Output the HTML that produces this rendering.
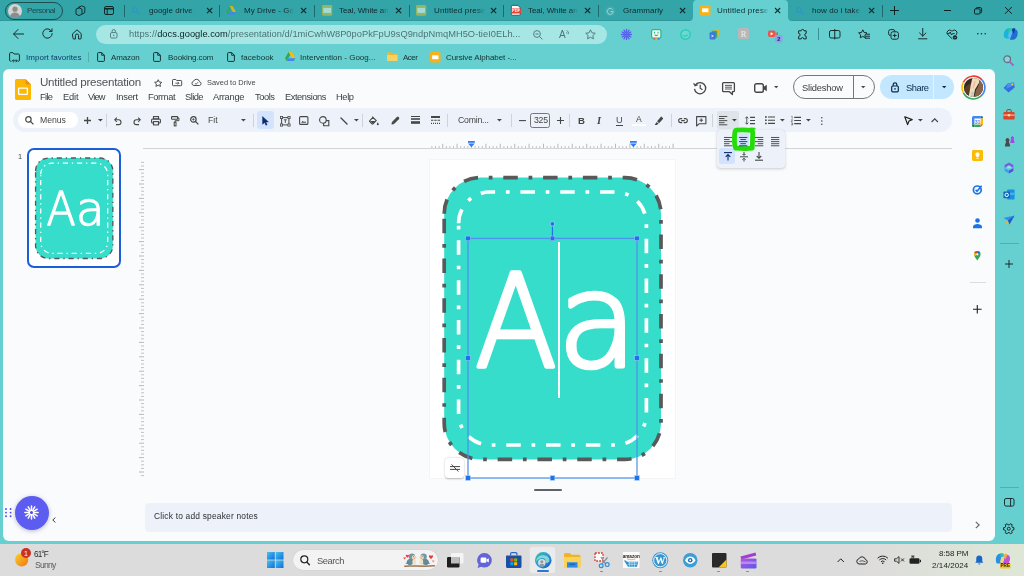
<!DOCTYPE html>
<html><head><meta charset="utf-8"><title>Untitled presentation - Google Slides</title>
<style>
*{box-sizing:border-box;margin:0;padding:0}
html,body{width:1024px;height:576px;overflow:hidden}
body{position:relative;background:#66d0d1;font-family:"Liberation Sans",sans-serif;color:#1f1f1f}
.abs{position:absolute}
.t{position:absolute;white-space:nowrap;line-height:1}
svg{position:absolute;overflow:visible}
.x{will-change:opacity}
</style></head><body>

<!-- tab bar -->
<div class="abs" style="left:0.00px;top:0.00px;width:1024.00px;height:21.00px;background:#33a4a7;box-shadow:inset 0 -1px 0 #2e989b"></div>
<div class="abs" style="left:5px;top:2px;width:58px;height:17.5px;border:1px solid #1d4f51;border-radius:9px"></div>
<svg style="left:8.00px;top:3.50px" width="14" height="14" viewBox="0 0 14 14" ><circle cx="7" cy="7" r="7" fill="#d4d4d4"/><circle cx="7" cy="5.2" r="2.6" fill="#8c8c8c"/><path d="M2.2 12.2a4.8 3.6 0 0 1 9.6 0A7 7 0 0 1 2.2 12.2z" fill="#8c8c8c"/></svg>
<svg class="x" style="left:27.00px;top:13.00px" width="1" height="1"><text x="0" y="0" font-size="8.00" letter-spacing="-0.439" fill="#1c4a4c" >Personal</text></svg>
<svg style="left:75.00px;top:5.00px" width="11" height="11" viewBox="0 0 11 11" ><g fill="none" stroke="#143032" stroke-width="1"><path d="M3.6 2.2l3.2-1.3 3 1.2v5.6l-3 1.4"/><path d="M1 4.2l3-1.4 3 1.4v5l-3 1.4-3-1.4z"/><path d="M2.4 3.4l2.8-1.2"/></g></svg>
<svg style="left:104.00px;top:6.00px" width="10" height="9" viewBox="0 0 10 9" ><rect x=".5" y=".5" width="9" height="8" rx="1.5" fill="none" stroke="#102a2b" stroke-width="1"/><path d="M.5 2.7h9" stroke="#102a2b" stroke-width="1.6"/><path d="M3.2 2.5v6" stroke="#102a2b" stroke-width="1"/></svg>
<div class="abs" style="left:123.60px;top:4.50px;width:0.80px;height:12.50px;background:#1f6a6c;"></div>
<svg style="left:132.00px;top:6.60px" width="8" height="8" viewBox="0 0 8 8" ><circle cx="3" cy="3" r="2.4" fill="none" stroke="#2f8fd8" stroke-width="0.85"/><path d="M4.8 4.8L7.4 7.4" stroke="#2f8fd8" stroke-width="1.05"/></svg>
<svg class="x" style="left:148.60px;top:13.00px" width="1" height="1"><text x="0" y="0" font-size="8.00" letter-spacing="0.002" fill="#0f2a2b" >google drive -</text></svg>
<div class="abs" style="left:189px;top:5px;width:16px;height:12px;background:linear-gradient(90deg,rgba(51,164,167,0),rgba(51,164,167,1) 43.75%)"></div>
<svg style="left:206.90px;top:8.00px" width="5.2" height="5.2" viewBox="0 0 5.2 5.2" ><path d="M0 0L5.2 5.2 M5.2 0L0 5.2" stroke="#10292a" stroke-width="1.1" fill="none"/></svg>
<div class="abs" style="left:219.30px;top:4.50px;width:0.80px;height:12.50px;background:#1f6a6c;"></div>
<svg style="left:226.00px;top:6.20px" width="10" height="9" viewBox="0 0 10 9" ><g opacity="0.75"><path d="M3.4 0h3.2l3.4 5.9H6.8z" fill="#fbbc04"/><path d="M3.4 0L0 5.9l1.6 2.8L5 2.8z" fill="#34a853"/><path d="M1.6 8.7h6.8L10 5.9H3.2z" fill="#4285f4"/></g></svg>
<svg class="x" style="left:243.80px;top:13.00px" width="1" height="1"><text x="0" y="0" font-size="8.00" letter-spacing="0.055" fill="#0f2a2b" >My Drive - Goo</text></svg>
<div class="abs" style="left:286px;top:5px;width:17px;height:12px;background:linear-gradient(90deg,rgba(51,164,167,0),rgba(51,164,167,1) 47.0588%)"></div>
<svg style="left:301.40px;top:8.00px" width="5.2" height="5.2" viewBox="0 0 5.2 5.2" ><path d="M0 0L5.2 5.2 M5.2 0L0 5.2" stroke="#10292a" stroke-width="1.1" fill="none"/></svg>
<div class="abs" style="left:313.90px;top:4.50px;width:0.80px;height:12.50px;background:#1f6a6c;"></div>
<svg style="left:321.80px;top:5.20px" width="10.3" height="10.8" viewBox="0 0 10.3 10.8" ><rect width="10.300" height="10.800" rx="1.500" fill="#97b463"/><rect x="1.300" y="2.900" width="7.700" height="5" fill="#a2dcd9"/></svg>
<svg class="x" style="left:338.70px;top:13.00px" width="1" height="1"><text x="0" y="0" font-size="8.00" letter-spacing="-0.081" fill="#0f2a2b" >Teal, White and</text></svg>
<div class="abs" style="left:381px;top:5px;width:17px;height:12px;background:linear-gradient(90deg,rgba(51,164,167,0),rgba(51,164,167,1) 47.0588%)"></div>
<svg style="left:395.90px;top:8.00px" width="5.2" height="5.2" viewBox="0 0 5.2 5.2" ><path d="M0 0L5.2 5.2 M5.2 0L0 5.2" stroke="#10292a" stroke-width="1.1" fill="none"/></svg>
<div class="abs" style="left:408.60px;top:4.50px;width:0.80px;height:12.50px;background:#1f6a6c;"></div>
<svg style="left:416.00px;top:5.20px" width="10.3" height="10.8" viewBox="0 0 10.3 10.8" ><rect width="10.300" height="10.800" rx="1.500" fill="#97b463"/><rect x="1.300" y="2.900" width="7.700" height="5" fill="#a2dcd9"/></svg>
<svg class="x" style="left:433.60px;top:13.00px" width="1" height="1"><text x="0" y="0" font-size="8.00" letter-spacing="0.165" fill="#0f2a2b" >Untitled prese</text></svg>
<div class="abs" style="left:476px;top:5px;width:18px;height:12px;background:linear-gradient(90deg,rgba(51,164,167,0),rgba(51,164,167,1) 50%)"></div>
<svg style="left:490.90px;top:8.00px" width="5.2" height="5.2" viewBox="0 0 5.2 5.2" ><path d="M0 0L5.2 5.2 M5.2 0L0 5.2" stroke="#10292a" stroke-width="1.1" fill="none"/></svg>
<div class="abs" style="left:503.10px;top:4.50px;width:0.80px;height:12.50px;background:#1f6a6c;"></div>
<svg style="left:511.00px;top:5.00px" width="10" height="10.6" viewBox="0 0 10 10.6" ><path d="M1.200 .4h5.600l2.400 2.400v6.600a.8.800 0 0 1-.8.800H1.200a.8.800 0 0 1-.8-.8V1.200a.8.800 0 0 1 .8-.8z" fill="#fdfdfd" stroke="#2a2f30" stroke-width=".7"/><rect x="0" y="3.600" width="10" height="5" rx=".8" fill="#ea4335"/><text x="5" y="7.500" font-size="4" font-weight="bold" fill="#fff" text-anchor="middle" font-family="Liberation Sans, sans-serif">PDF</text></svg>
<svg class="x" style="left:527.60px;top:13.00px" width="1" height="1"><text x="0" y="0" font-size="8.00" letter-spacing="-0.081" fill="#0f2a2b" >Teal, White and</text></svg>
<div class="abs" style="left:570px;top:5px;width:17px;height:12px;background:linear-gradient(90deg,rgba(51,164,167,0),rgba(51,164,167,1) 47.0588%)"></div>
<svg style="left:585.40px;top:8.00px" width="5.2" height="5.2" viewBox="0 0 5.2 5.2" ><path d="M0 0L5.2 5.2 M5.2 0L0 5.2" stroke="#10292a" stroke-width="1.1" fill="none"/></svg>
<div class="abs" style="left:598.10px;top:4.50px;width:0.80px;height:12.50px;background:#1f6a6c;"></div>
<svg style="left:605.00px;top:5.60px" width="10.5" height="10.5" viewBox="0 0 10.5 10.5" ><circle cx="5.25" cy="5.25" r="5.25" fill="#44a9ab"/><path d="M7.600 3.600A3 3 0 1 0 8.200 5.600H5.600" fill="none" stroke="#9ad6d6" stroke-width="1"/></svg>
<svg class="x" style="left:622.50px;top:13.00px" width="1" height="1"><text x="0" y="0" font-size="8.00" letter-spacing="0.056" fill="#0f2a2b" >Grammarly</text></svg>
<svg style="left:680.40px;top:8.00px" width="5.2" height="5.2" viewBox="0 0 5.2 5.2" ><path d="M0 0L5.2 5.2 M5.2 0L0 5.2" stroke="#10292a" stroke-width="1.1" fill="none"/></svg>
<div class="abs" style="left:693px;top:0;width:95px;height:21px;background:#66d0d1;border-radius:4px 4px 0 0"></div>
<svg style="left:689.00px;top:17.00px" width="4" height="4" viewBox="0 0 4 4" ><path d="M4 0v4H0A4 4 0 0 0 4 0z" fill="#66d0d1"/></svg>
<svg style="left:788.00px;top:17.00px" width="4" height="4" viewBox="0 0 4 4" ><path d="M0 0v4h4A4 4 0 0 1 0 0z" fill="#66d0d1"/></svg>
<svg style="left:700.00px;top:5.40px" width="10.5" height="10.5" viewBox="0 0 10.5 10.5" ><rect width="10.5" height="10.5" rx="1.6" fill="#f9b114"/><rect x="2.1" y="3.3" width="6.3" height="3.9" fill="#fff"/></svg>
<svg class="x" style="left:717.40px;top:13.00px" width="1" height="1"><text x="0" y="0" font-size="8.00" letter-spacing="0.165" fill="#0f2a2b" >Untitled prese</text></svg>
<div class="abs" style="left:760px;top:5px;width:18px;height:12px;background:linear-gradient(90deg,rgba(102,208,209,0),rgba(102,208,209,1) 50%)"></div>
<svg style="left:775.40px;top:8.00px" width="5.2" height="5.2" viewBox="0 0 5.2 5.2" ><path d="M0 0L5.2 5.2 M5.2 0L0 5.2" stroke="#10292a" stroke-width="1.1" fill="none"/></svg>
<svg style="left:796.00px;top:6.60px" width="8" height="8" viewBox="0 0 8 8" ><circle cx="3" cy="3" r="2.4" fill="none" stroke="#2f8fd8" stroke-width="0.85"/><path d="M4.8 4.8L7.4 7.4" stroke="#2f8fd8" stroke-width="1.05"/></svg>
<svg class="x" style="left:811.80px;top:13.00px" width="1" height="1"><text x="0" y="0" font-size="8.00" letter-spacing="0.081" fill="#0f2a2b" >how do i take s</text></svg>
<div class="abs" style="left:854px;top:5px;width:16px;height:12px;background:linear-gradient(90deg,rgba(51,164,167,0),rgba(51,164,167,1) 43.75%)"></div>
<svg style="left:869.40px;top:8.00px" width="5.2" height="5.2" viewBox="0 0 5.2 5.2" ><path d="M0 0L5.2 5.2 M5.2 0L0 5.2" stroke="#10292a" stroke-width="1.1" fill="none"/></svg>
<div class="abs" style="left:882.00px;top:4.50px;width:0.80px;height:12.50px;background:#1f6a6c;"></div>
<svg style="left:890.00px;top:6.30px" width="9" height="9" viewBox="0 0 9 9" ><path d="M4.5 0v9M0 4.5h9" stroke="#0d2223" stroke-width="1" fill="none"/></svg>
<svg style="left:944.00px;top:10.10px" width="7" height="1" viewBox="0 0 7 1" ><path d="M0 .5h7" stroke="#0d2223" stroke-width="1"/></svg>
<svg style="left:973.50px;top:7.00px" width="8" height="7.5" viewBox="0 0 8 7.5" ><rect x=".5" y="1.8" width="5.6" height="5.2" rx="1.2" fill="none" stroke="#0d2223" stroke-width="1"/><path d="M2 1.8A1.4 1.4 0 0 1 3.4 .5h2.7A1.6 1.6 0 0 1 7.6 2v2.6A1.4 1.4 0 0 1 6.2 6" fill="none" stroke="#0d2223" stroke-width="1"/></svg>
<svg style="left:1005.10px;top:7.20px" width="6.8" height="6.8" viewBox="0 0 6.8 6.8" ><path d="M0 0L6.8 6.8 M6.8 0L0 6.8" stroke="#0d2223" stroke-width="1" fill="none"/></svg>
<!-- nav bar -->
<svg style="left:13.00px;top:29.00px" width="11" height="10" viewBox="0 0 11 10" ><path d="M5 .5L.6 5 5 9.5M.8 5H10.6" fill="none" stroke="#1b2b2c" stroke-width="1" stroke-linecap="round" stroke-linejoin="round"/></svg>
<svg style="left:42.00px;top:28.30px" width="11" height="11" viewBox="0 0 11 11" ><path d="M9.6 3.2A4.7 4.7 0 1 0 10.2 5.5" fill="none" stroke="#1b2b2c" stroke-width="1" stroke-linecap="round" stroke-linejoin="round"/><path d="M10 .8v2.6H7.4" fill="none" stroke="#1b2b2c" stroke-width="1" stroke-linecap="round" stroke-linejoin="round"/></svg>
<svg style="left:72.00px;top:28.50px" width="10" height="11" viewBox="0 0 10 11" ><path d="M.8 4.6L5 .8l4.2 3.8V9a1 1 0 0 1-1 1H6.6V6.6a1.6 1.6 0 0 0-3.2 0V10H1.8a1 1 0 0 1-1-1z" fill="none" stroke="#1b2b2c" stroke-width="1" stroke-linecap="round" stroke-linejoin="round"/></svg>
<div class="abs" style="left:96px;top:24.5px;width:510.5px;height:19.5px;border-radius:10px;background:#a6e7e5"></div>
<svg style="left:109.50px;top:29.30px" width="7.5" height="9.5" viewBox="0 0 7.5 9.5" ><rect x=".5" y="3.6" width="6.5" height="5.4" rx="1.2" fill="none" stroke="#4d7374" stroke-width=".9"/><path d="M2.1 3.6V2.2a1.65 1.65 0 0 1 3.3 0v1.4" fill="none" stroke="#4d7374" stroke-width=".9"/><circle cx="3.75" cy="6.3" r=".7" fill="#4d7374"/></svg>
<svg class="x" style="left:128.7px;top:37.4px" width="1" height="1"><text x="0" y="0" font-size="9.3" letter-spacing="0.028" fill="#4c7475">https://<tspan fill="#0c2021">docs.google.com</tspan>/presentation/d/1miCwhW8P0poPkFpU9sQ9ndpNmqMH5O-tieI0ELh...</text></svg>
<svg style="left:532.50px;top:29.50px" width="10" height="10" viewBox="0 0 10 10" ><circle cx="4" cy="4" r="3.4" fill="none" stroke="#4d7374" stroke-width=".9"/><path d="M6.5 6.5L9.4 9.4M2.4 4h3.2" stroke="#4d7374" stroke-width=".9" fill="none"/></svg>
<svg class="x" style="left:558.50px;top:37.60px" width="1" height="1"><text x="0" y="0" font-size="10.00" fill="#4d7374" >A</text></svg>
<svg style="left:566.00px;top:29.50px" width="4" height="5" viewBox="0 0 4 5" ><path d="M.5 .5a3 3 0 0 1 2 3.6M.3 2.3a1.4 1.4 0 0 1 .8 1.5" fill="none" stroke="#4d7374" stroke-width=".7"/></svg>
<svg style="left:585.00px;top:28.80px" width="11" height="10.5" viewBox="0 0 11 10.5" ><path d="M5.5 .8l1.45 3 3.3.45-2.4 2.3.58 3.25L5.5 8.25 2.57 9.8l.58-3.25L.75 4.25l3.3-.45z" fill="none" stroke="#4d7374" stroke-width=".9" stroke-linejoin="round"/></svg>
<svg style="left:620.50px;top:28.50px" width="11" height="11" viewBox="0 0 11 11" ><g transform="translate(5.5 5.5)" stroke="#5b5bf0" stroke-width="1.3" stroke-linecap="round"><path d="M0 -2.2V-5" transform="rotate(0)"/><path d="M0 -2.2V-5" transform="rotate(30)"/><path d="M0 -2.2V-5" transform="rotate(60)"/><path d="M0 -2.2V-5" transform="rotate(90)"/><path d="M0 -2.2V-5" transform="rotate(120)"/><path d="M0 -2.2V-5" transform="rotate(150)"/><path d="M0 -2.2V-5" transform="rotate(180)"/><path d="M0 -2.2V-5" transform="rotate(210)"/><path d="M0 -2.2V-5" transform="rotate(240)"/><path d="M0 -2.2V-5" transform="rotate(270)"/><path d="M0 -2.2V-5" transform="rotate(300)"/><path d="M0 -2.2V-5" transform="rotate(330)"/></g><circle cx="5.5" cy="5.5" r="1.6" fill="#5b5bf0"/></svg>
<svg style="left:650.50px;top:28.50px" width="10.5" height="11" viewBox="0 0 10.5 11" ><rect x=".6" y=".6" width="9.300" height="8.400" rx="1.600" fill="#f4fbf8" stroke="#2db67d" stroke-width="1.200"/><path d="M3.500 2.800v1.600M7 2.800v1.600" stroke="#2db67d" stroke-width="1.100"/><path d="M3 5.800a2.300 1.800 0 0 0 4.500 0z" fill="#2db67d"/><rect x="2.500" y="9.200" width="2" height="1.400" fill="#e8503a"/><rect x="4.500" y="9.200" width="2" height="1.400" fill="#f7b928"/><rect x="6.500" y="9.200" width="2" height="1.400" fill="#3a78e8"/></svg>
<svg style="left:679.50px;top:28.50px" width="11" height="11" viewBox="0 0 11 11" ><circle cx="5.500" cy="5.500" r="4.700" fill="#6ad9d2" stroke="#1fcdb4" stroke-width="1.300"/><path d="M3.300 6.300a2.500 2 0 0 0 4.400 -.8" fill="none" stroke="#1fc0a8" stroke-width="1"/></svg>
<svg style="left:708.50px;top:28.50px" width="11" height="11" viewBox="0 0 11 11" ><rect x="4.5" y=".6" width="5.6" height="7" rx="1" fill="#d9b838"/><rect x="2.6" y="1.8" width="5.6" height="7" rx="1" fill="#3fa56b"/><rect x=".6" y="3.2" width="6" height="7.2" rx="1" fill="#3b78dc"/><path d="M2.6 5.6l2.4 1.4-2.4 1.4z" fill="#cfe0fa"/></svg>
<svg style="left:737.50px;top:28.30px" width="11" height="11" viewBox="0 0 11 11" ><rect width="11" height="11" rx="1.6" fill="#b8b8b8"/><text x="5.5" y="8.6" font-size="8.5" fill="#eee" text-anchor="middle" font-family="Liberation Serif, serif">R</text></svg>
<svg style="left:767.50px;top:29.50px" width="10" height="8" viewBox="0 0 10 8" ><rect x="0" y=".6" width="7.6" height="6.4" rx="1.8" fill="#e8574a"/><path d="M7.4 3.8l2.6-2v4.4z" fill="#e8574a"/><path d="M2.6 2.2v3.2l2.8-1.6z" fill="#fff"/></svg>
<svg style="left:774.50px;top:35.00px" width="7.5" height="7.5" viewBox="0 0 7.5 7.5" ><rect width="7.5" height="7.5" rx="1.4" fill="#8fa0ec"/><text x="3.75" y="6" font-size="5.6" font-weight="bold" fill="#1a2250" text-anchor="middle" font-family="Liberation Sans, sans-serif">2</text></svg>
<svg style="left:797.00px;top:28.50px" width="11" height="11" viewBox="0 0 11 11" ><path d="M4.2 1.8a1.4 1.4 0 0 1 2.8 0h2.2v2.6a1.45 1.45 0 0 0 0 2.9v2.6H6.8a1.3 1.3 0 0 0-2.6 0H1.6V7.4a1.5 1.5 0 0 0 0-3V1.8z" fill="none" stroke="#1b2b2c" stroke-width="1" stroke-linejoin="round"/></svg>
<div class="abs" style="left:818.20px;top:28.00px;width:0.80px;height:12.00px;background:#3e8f90;"></div>
<svg style="left:828.50px;top:29.00px" width="11.5" height="10" viewBox="0 0 11.5 10" ><rect x=".5" y="1.5" width="10.5" height="7.5" rx="1.6" fill="none" stroke="#1b2b2c" stroke-width="1"/><path d="M5.75 0v10.4" stroke="#1b2b2c" stroke-width="1"/></svg>
<svg style="left:857.50px;top:28.60px" width="12" height="10.5" viewBox="0 0 12 10.5" ><path d="M4.8 .8l1.3 2.7 2.9.4-2.1 2 .5 2.9-2.6-1.4-2.6 1.4.5-2.9-2.1-2 2.9-.4z" fill="none" stroke="#1b2b2c" stroke-width="1" stroke-linejoin="round"/><path d="M8.6 5.2h3M8.2 7.2h3.4M7.4 9.2h4.2" stroke="#1b2b2c" stroke-width="1" stroke-linecap="round"/></svg>
<svg style="left:888.00px;top:28.50px" width="11" height="11" viewBox="0 0 11 11" ><path d="M2.4 6.6A2 2 0 0 1 .6 4.6V2.6A2 2 0 0 1 2.6 .6h2.4A2 2 0 0 1 7 2.4" fill="none" stroke="#1b2b2c" stroke-width="1"/><rect x="3" y="2.8" width="7.4" height="7.4" rx="1.8" fill="none" stroke="#1b2b2c" stroke-width="1"/><path d="M6.7 4.6v3.8M4.8 6.5h3.8" stroke="#1b2b2c" stroke-width="1"/></svg>
<svg style="left:918.00px;top:28.30px" width="9.5" height="11.5" viewBox="0 0 9.5 11.5" ><path d="M4.75 .4v7.6M1.6 5l3.15 3.1L7.9 5M.6 10.8h8.3" fill="none" stroke="#1b2b2c" stroke-width="1" stroke-linecap="round" stroke-linejoin="round"/></svg>
<svg style="left:946.00px;top:28.60px" width="12" height="11" viewBox="0 0 12 11" ><path d="M6 9.6L1.6 5.4A2.7 2.7 0 0 1 5.6 1.8l.4.5.4-.5a2.7 2.7 0 0 1 4 3.6l-.6.6" fill="none" stroke="#1b2b2c" stroke-width="1" stroke-linecap="round" stroke-linejoin="round"/><path d="M1.2 4.6h2l1-1.6 1.4 3 1-1.4h1.6" fill="none" stroke="#1b2b2c" stroke-width="1" stroke-linecap="round" stroke-linejoin="round"/><circle cx="9" cy="8.4" r="2.2" fill="#10292a"/><path d="M8.1 8.4l.7.7 1.2-1.3" stroke="#9fe0df" stroke-width=".6" fill="none"/></svg>
<svg style="left:976.50px;top:33.00px" width="9" height="1.6" viewBox="0 0 9 1.6" ><circle cx=".8" cy=".8" r=".8" fill="#1b2b2c"/><circle cx="4.5" cy=".8" r=".8" fill="#1b2b2c"/><circle cx="8.2" cy=".8" r=".8" fill="#1b2b2c"/></svg>
<svg style="left:1003.00px;top:26.50px" width="15.5" height="14" viewBox="0 0 15.5 14" ><path d="M1 9.5C.2 6 2 1.5 5.4 1.2h3.2L6 11.6H3.4A2.4 2.4 0 0 1 1 9.500z" fill="#19b4d8"/><path d="M5.4 1.2C7 .8 8.6 1 9 2.6l-1.2 4-2-.4z" fill="#2bc9a0"/><path d="M14.5 4.5c.8 3.500-1 8-4.400 8.300H6.900L9.500 2.400h2.600a2.400 2.400 0 0 1 2.400 2.100z" fill="#1e6fd0"/><path d="M8.800 2.600c.6-1.400 2.400-1.600 3.600-.8l-2 5.200z" fill="#0e3fa0"/><path d="M6.200 4.600h3.400l-1.600 5.400H4.600z" fill="#5fb8ee"/></svg>
<!-- bookmarks -->
<svg style="left:9.00px;top:51.50px" width="11.5" height="10.5" viewBox="0 0 11.5 10.5" ><path d="M.6 8.600V1.600a1 1 0 0 1 1-1h2.300l1.200 1.400h4.300a1 1 0 0 1 1 1v5.200a1 1 0 0 1-1 1H9" fill="none" stroke="#13302f" stroke-width="1" stroke-linejoin="round"/><path d="M.6 8.600a1 1 0 0 0 1 .6h.8" fill="none" stroke="#13302f" stroke-width="1"/><path d="M3.600 8.800h4.600M4.800 7.400L3.400 8.800l1.400 1.400M7 7.400l1.400 1.400L7 10.200" fill="none" stroke="#13302f" stroke-width=".9"/></svg>
<svg class="x" style="left:25.80px;top:59.60px" width="1" height="1"><text x="0" y="0" font-size="8.00" letter-spacing="0.025" fill="#0e3a6a" >Import favorites</text></svg>
<div class="abs" style="left:88.00px;top:52.00px;width:0.70px;height:10.00px;background:#4fb0b1;"></div>
<svg style="left:97.00px;top:51.60px" width="8" height="10" viewBox="0 0 8 10" ><path d="M.6 1.400a.8.800 0 0 1 .8-.8h3.400l2.600 2.600v5.400a.8.800 0 0 1-.8.800H1.400a.8.800 0 0 1-.8-.8z" fill="none" stroke="#13302f" stroke-width="1" stroke-linejoin="round"/><path d="M4.700.700v2.600h2.600" fill="none" stroke="#13302f" stroke-width=".9"/></svg>
<svg class="x" style="left:111.30px;top:59.60px" width="1" height="1"><text x="0" y="0" font-size="8.00" letter-spacing="-0.110" fill="#13302f" >Amazon</text></svg>
<svg style="left:153.00px;top:51.60px" width="8" height="10" viewBox="0 0 8 10" ><path d="M.6 1.400a.8.800 0 0 1 .8-.8h3.400l2.600 2.600v5.400a.8.800 0 0 1-.8.800H1.400a.8.800 0 0 1-.8-.8z" fill="none" stroke="#13302f" stroke-width="1" stroke-linejoin="round"/><path d="M4.700.700v2.600h2.600" fill="none" stroke="#13302f" stroke-width=".9"/></svg>
<svg class="x" style="left:167.60px;top:59.60px" width="1" height="1"><text x="0" y="0" font-size="8.00" letter-spacing="-0.075" fill="#13302f" >Booking.com</text></svg>
<svg style="left:226.50px;top:51.60px" width="8" height="10" viewBox="0 0 8 10" ><path d="M.6 1.400a.8.800 0 0 1 .8-.8h3.400l2.600 2.600v5.400a.8.800 0 0 1-.8.800H1.400a.8.800 0 0 1-.8-.8z" fill="none" stroke="#13302f" stroke-width="1" stroke-linejoin="round"/><path d="M4.700.700v2.600h2.600" fill="none" stroke="#13302f" stroke-width=".9"/></svg>
<svg class="x" style="left:240.60px;top:59.60px" width="1" height="1"><text x="0" y="0" font-size="8.00" letter-spacing="0.019" fill="#13302f" >facebook</text></svg>
<svg style="left:285.00px;top:52.30px" width="10.5" height="9.45" viewBox="0 0 10 9" ><g opacity="1"><path d="M3.4 0h3.2l3.4 5.9H6.8z" fill="#fbbc04"/><path d="M3.4 0L0 5.9l1.6 2.8L5 2.8z" fill="#34a853"/><path d="M1.6 8.7h6.8L10 5.9H3.2z" fill="#4285f4"/></g></svg>
<svg class="x" style="left:300.00px;top:59.60px" width="1" height="1"><text x="0" y="0" font-size="8.00" letter-spacing="0.017" fill="#13302f" >Intervention - Goog...</text></svg>
<svg style="left:386.50px;top:52.00px" width="10.5" height="9" viewBox="0 0 10.5 9" ><path d="M0 1.200a1 1 0 0 1 1-1h3l1.200 1.300h4.300a1 1 0 0 1 1 1V8a1 1 0 0 1-1 1H1a1 1 0 0 1-1-1z" fill="#e9b83a"/><path d="M0 3h10.500v5a1 1 0 0 1-1 1H1a1 1 0 0 1-1-1z" fill="#f6d264"/></svg>
<svg class="x" style="left:403.30px;top:59.60px" width="1" height="1"><text x="0" y="0" font-size="8.00" letter-spacing="-0.483" fill="#13302f" >Acer</text></svg>
<svg style="left:429.50px;top:51.80px" width="10.5" height="10.5" viewBox="0 0 10.5 10.5" ><rect width="10.500" height="10.500" rx="1.600" fill="#f9b114"/><rect x="2.100" y="3.300" width="6.300" height="3.900" fill="#fff"/></svg>
<svg class="x" style="left:446.00px;top:59.60px" width="1" height="1"><text x="0" y="0" font-size="8.00" letter-spacing="-0.077" fill="#13302f" >Cursive Alphabet -...</text></svg>
<!-- edge sidebar -->
<svg style="left:1003.10px;top:55.00px" width="11" height="11" viewBox="0 0 11 11" ><circle cx="4.200" cy="4.200" r="3.300" fill="#9ad8ee" fill-opacity=".6" stroke="#6a6f78" stroke-width="1.300"/><path d="M6.800 6.800L10 10" stroke="#b455d8" stroke-width="1.800" stroke-linecap="round"/></svg>
<svg style="left:1002.60px;top:82.00px" width="12" height="11" viewBox="0 0 12 11" ><path d="M5 1.200L11 .4l.6 5L5.600 10.600 .6 6z" fill="#2f6fe0"/><path d="M5 1.200L11 .4l.300 2.600L3 7z" fill="#4f8ff0"/><circle cx="9.300" cy="2.600" r="1" fill="#f3c13a"/></svg>
<svg style="left:1002.60px;top:109.00px" width="12" height="11" viewBox="0 0 12 11" ><rect x=".4" y="3" width="11.200" height="7.600" rx="1.200" fill="#d8452b"/><path d="M3.800 3V1.600a1 1 0 0 1 1-1h2.400a1 1 0 0 1 1 1V3" fill="none" stroke="#a83a2a" stroke-width="1"/><rect x=".4" y="5.400" width="11.200" height="1.400" fill="#f2a58f"/><rect x="4.800" y="5" width="2.400" height="2.400" fill="#f6d8a0"/></svg>
<svg style="left:1002.60px;top:135.00px" width="12" height="12" viewBox="0 0 12 12" ><path d="M2 11.400h5V10L5.800 6.600A2 2 0 1 0 3.200 6.600L2 10z" fill="#4a4a4a"/><path d="M7.400 8h4V6.800L10.600 4a1.600 1.600 0 1 0-2.400 0L7.400 6.800z" fill="#a646e8"/></svg>
<svg style="left:1002.60px;top:162.00px" width="12" height="12" viewBox="0 0 12 12" ><path d="M6 .6L10.400 3v3L6 3.600 1.600 6V3z" fill="#7a5cf0"/><path d="M1.600 6L6 8.400V11.400L1.600 9z" fill="#3aa0f0"/><path d="M10.400 6L6 8.400V11.400L10.400 9z" fill="#5a4fd8"/><path d="M6 3.600l2.400 1.300L6 6.200 3.600 4.900z" fill="#9fe0df"/></svg>
<svg style="left:1002.60px;top:189.00px" width="12" height="11" viewBox="0 0 12 11" ><rect x="4" y=".6" width="7.600" height="9.800" rx="1" fill="#1a8fe0"/><path d="M4 3.600h7.600V6H4z" fill="#3fb2f5"/><rect x=".4" y="2.600" width="6.600" height="6.600" rx="1" fill="#0f68c0"/><circle cx="3.700" cy="5.900" r="1.700" fill="none" stroke="#fff" stroke-width="1"/></svg>
<svg style="left:1002.60px;top:215.00px" width="12" height="10" viewBox="0 0 12 10" ><path d="M.4 3L11.600 .6 6.400 9.400 5 5.600z" fill="#2f8fe8"/><path d="M5 5.600L11.600 .6 6.400 9.400z" fill="#1a5fc0"/><path d="M2 6.400l3 .6 1.400 2.400-3-.6z" fill="#f0b030"/></svg>
<div class="abs" style="left:1000.00px;top:242.60px;width:18.50px;height:0.80px;background:#4fb0b1;"></div>
<svg style="left:1004.60px;top:260.00px" width="8" height="8" viewBox="0 0 8 8" ><path d="M4 0v8M0 4h8" stroke="#1b2b2c" stroke-width="1"/></svg>
<div class="abs" style="left:1000.00px;top:487.20px;width:18.50px;height:0.80px;background:#4fb0b1;"></div>
<svg style="left:1003.80px;top:498.20px" width="10.5" height="8.6" viewBox="0 0 10.5 8.6" ><rect x=".5" y=".5" width="9.500" height="7.600" rx="1.600" fill="none" stroke="#1b2b2c" stroke-width="1"/><path d="M6.600 .5v7.600" stroke="#1b2b2c" stroke-width="1"/></svg>
<svg style="left:1003.30px;top:523.30px" width="11.5" height="11.5" viewBox="0 0 11.5 11.5" ><path d="M10.93 4.65 L10.93 6.85 L9.55 6.99 L8.72 8.43 L9.30 9.69 L7.39 10.79 L6.58 9.66 L4.92 9.66 L4.11 10.79 L2.20 9.69 L2.78 8.43 L1.95 6.99 L0.57 6.85 L0.57 4.65 L1.95 4.51 L2.78 3.07 L2.20 1.81 L4.11 0.71 L4.92 1.84 L6.58 1.84 L7.39 0.71 L9.30 1.81 L8.72 3.07 L9.55 4.51z" fill="none" stroke="#1b2b2c" stroke-width="1" stroke-linejoin="round"/><circle cx="5.750" cy="5.750" r="1.500" fill="none" stroke="#1b2b2c" stroke-width="1"/></svg>
<!-- page -->
<div class="abs" style="left:3px;top:69px;width:991.700px;height:472px;background:#f9fbfd;border-radius:6px 6px 6px 6px"></div>
<svg style="left:15.00px;top:78.80px" width="16" height="21" viewBox="0 0 16 21" ><path d="M0 1.600A1.600 1.600 0 0 1 1.600 0H10.500L16 5.500V19.400A1.600 1.600 0 0 1 14.400 21H1.600A1.600 1.600 0 0 1 0 19.400z" fill="#fbb704"/><path d="M10.500 0L16 5.500h-4a1.500 1.500 0 0 1-1.500-1.500z" fill="#e8911a"/><rect x="3.600" y="9.200" width="8.800" height="6.200" rx=".6" fill="none" stroke="#fff" stroke-width="1.300"/></svg>
<svg class="x" style="left:40.00px;top:85.50px" width="1" height="1"><text x="0" y="0" font-size="11.60" letter-spacing="-0.255" fill="#505357" >Untitled presentation</text></svg>
<svg style="left:153.80px;top:79.20px" width="8.4" height="8" viewBox="0 0 8.4 8" ><path d="M4.200 .7l1.100 2.300 2.500.3-1.850 1.700.5 2.450L4.200 6.200 1.950 7.450l.5-2.450L.6 3.300l2.500-.3z" fill="none" stroke="#444746" stroke-width=".95" stroke-linejoin="round"/></svg>
<svg style="left:172.00px;top:79.20px" width="10.2" height="7.2" viewBox="0 0 10.2 7.2" ><path d="M.5 1.300a.8.800 0 0 1 .8-.8h2.500l.9 1h4.200a.8.800 0 0 1 .8.800v3.600a.8.800 0 0 1-.8.800H1.300a.8.800 0 0 1-.8-.8z" fill="none" stroke="#444746" stroke-width=".95"/><path d="M3.400 4.200h3.400M5.700 2.900l1.300 1.300-1.300 1.300" fill="none" stroke="#444746" stroke-width=".85"/></svg>
<svg style="left:190.80px;top:79.00px" width="11" height="7" viewBox="0 0 11 7" ><path d="M2.800 6.500A2.200 2.200 0 0 1 2.600 2.200 3.100 3.100 0 0 1 8.500 2.700 1.950 1.950 0 0 1 8.600 6.500z" fill="none" stroke="#444746" stroke-width=".95"/><path d="M4 4.200l1.100 1.100 2-2.100" fill="none" stroke="#444746" stroke-width=".85"/></svg>
<svg class="x" style="left:206.80px;top:84.60px" width="1" height="1"><text x="0" y="0" font-size="7.40" letter-spacing="0.013" fill="#444746" >Saved to Drive</text></svg>
<svg class="x" style="left:40.00px;top:99.70px" width="1" height="1"><text x="0" y="0" font-size="9.30" letter-spacing="-0.662" fill="#3a3d42" >File</text></svg>
<svg class="x" style="left:62.50px;top:99.70px" width="1" height="1"><text x="0" y="0" font-size="9.30" letter-spacing="-0.175" fill="#3a3d42" >Edit</text></svg>
<svg class="x" style="left:87.50px;top:99.70px" width="1" height="1"><text x="0" y="0" font-size="9.30" letter-spacing="-0.830" fill="#3a3d42" >View</text></svg>
<svg class="x" style="left:115.50px;top:99.70px" width="1" height="1"><text x="0" y="0" font-size="9.30" letter-spacing="-0.252" fill="#3a3d42" >Insert</text></svg>
<svg class="x" style="left:147.50px;top:99.70px" width="1" height="1"><text x="0" y="0" font-size="9.30" letter-spacing="-0.391" fill="#3a3d42" >Format</text></svg>
<svg class="x" style="left:184.50px;top:99.70px" width="1" height="1"><text x="0" y="0" font-size="9.30" letter-spacing="-0.545" fill="#3a3d42" >Slide</text></svg>
<svg class="x" style="left:213.00px;top:99.70px" width="1" height="1"><text x="0" y="0" font-size="9.30" letter-spacing="-0.264" fill="#3a3d42" >Arrange</text></svg>
<svg class="x" style="left:254.50px;top:99.70px" width="1" height="1"><text x="0" y="0" font-size="9.30" letter-spacing="-0.428" fill="#3a3d42" >Tools</text></svg>
<svg class="x" style="left:284.50px;top:99.70px" width="1" height="1"><text x="0" y="0" font-size="9.30" letter-spacing="-0.444" fill="#3a3d42" >Extensions</text></svg>
<svg class="x" style="left:335.50px;top:99.70px" width="1" height="1"><text x="0" y="0" font-size="9.30" letter-spacing="-0.376" fill="#3a3d42" >Help</text></svg>
<svg style="left:692.50px;top:80.50px" width="14" height="13.5" viewBox="0 0 14 13.5" ><path d="M2.300 4.200A5.600 5.600 0 1 1 1.500 7.800" fill="none" stroke="#444746" stroke-width="1.300"/><path d="M.6 2.200l1.500 2.600 2.700-1" fill="none" stroke="#444746" stroke-width="1.200"/><path d="M7.200 3.800v3.400l2.300 1.500" fill="none" stroke="#444746" stroke-width="1.200"/></svg>
<svg style="left:722.00px;top:81.50px" width="13" height="13" viewBox="0 0 13 13" ><path d="M1.600 .7h9.800a1 1 0 0 1 1 1v7a1 1 0 0 1-1 1h-1v2.800L7.400 9.700H1.600a1 1 0 0 1-1-1v-7a1 1 0 0 1 1-1z" fill="none" stroke="#444746" stroke-width="1.300" stroke-linejoin="round"/><path d="M3 3.400h7M3 5.200h7M3 7h7" stroke="#444746" stroke-width=".9"/></svg>
<svg style="left:754.00px;top:82.50px" width="13.5" height="10" viewBox="0 0 13.5 10" ><rect x=".7" y=".7" width="8.600" height="8.600" rx="1.800" fill="none" stroke="#444746" stroke-width="1.400"/><path d="M9.400 4l3.400-2.300v6.600L9.400 6z" fill="#444746"/></svg>
<svg style="left:773.80px;top:86.40px" width="4.4" height="2.2" viewBox="0 0 4.4 2.2" ><path d="M0 0h4.4 L2.2 2.2z" fill="#444746"/></svg>
<div class="abs" style="left:792.500px;top:75px;width:82px;height:23.700px;border:1px solid #747775;border-radius:12px"></div>
<div class="abs" style="left:852.50px;top:76.00px;width:0.80px;height:22.50px;background:#747775;"></div>
<svg class="x" style="left:802.00px;top:90.50px" width="1" height="1"><text x="0" y="0" font-size="9.30" letter-spacing="-0.174" fill="#3c4043" >Slideshow</text></svg>
<svg style="left:861.30px;top:86.40px" width="4.4" height="2.2" viewBox="0 0 4.4 2.2" ><path d="M0 0h4.4 L2.2 2.2z" fill="#444746"/></svg>
<div class="abs" style="left:879.500px;top:75.200px;width:74.500px;height:23.600px;background:#c2e7ff;border-radius:12px"></div>
<div class="abs" style="left:933.40px;top:75.20px;width:0.80px;height:23.60px;background:#e3f2fd;"></div>
<svg style="left:890.60px;top:81.50px" width="8" height="10.5" viewBox="0 0 8 10.5" ><rect x=".7" y="4" width="6.600" height="5.800" rx="1" fill="none" stroke="#0b2a4a" stroke-width="1.200"/><path d="M2.200 4V2.600a1.800 1.800 0 0 1 3.600 0V4" fill="none" stroke="#0b2a4a" stroke-width="1.200"/><circle cx="4" cy="6.900" r=".8" fill="#0b2a4a"/></svg>
<svg class="x" style="left:905.60px;top:90.50px" width="1" height="1"><text x="0" y="0" font-size="9.30" letter-spacing="-0.454" fill="#0b2a4a" >Share</text></svg>
<svg style="left:941.80px;top:86.40px" width="4.4" height="2.2" viewBox="0 0 4.4 2.2" ><path d="M0 0h4.4 L2.2 2.2z" fill="#0b2a4a"/></svg>
<svg style="left:960.60px;top:74.50px" width="25" height="25" viewBox="0 0 25 25" ><path d="M2.43 7.15A11.4 11.4 0 0 1 20.97 4.87" fill="none" stroke="#ea4335" stroke-width="1.6"/><path d="M20.97 4.87A11.4 11.4 0 0 1 19.83 21.23" fill="none" stroke="#4285f4" stroke-width="1.6"/><path d="M19.83 21.23A11.4 11.4 0 0 1 2.43 17.85" fill="none" stroke="#34a853" stroke-width="1.6"/><path d="M2.43 17.85A11.4 11.4 0 0 1 2.43 7.15" fill="none" stroke="#fbbc04" stroke-width="1.6"/><defs><clipPath id="avc"><circle cx="12.5" cy="12.500" r="9.600"/></clipPath></defs><g clip-path="url(#avc)"><rect x="0" y="0" width="25" height="25" fill="#33291f"/><path d="M3 14c2-3 5-5 7-6l2 3-3 9-5 2z" fill="#5a3d2c"/><path d="M11.500 2.500l6.500 1c1 2 .5 4-1 6l-3 5-1.500 8h-5l1.500-8c.5-3 1.500-8 2.500-12z" fill="#f1dcba"/><path d="M18.500 5c3 2 4 6 3.500 10l-3 6-5.500 1 1.500-7c2-3 3.500-6 3.500-10z" fill="#8b6348"/><path d="M13.500 6l1.200 .6-2.200 7-1-.4z" fill="#f0a9a4" opacity=".8"/><path d="M10.500 16.500l2.500 .5-.8 5-2.500-.5z" fill="#b9c2cc" opacity=".8"/></g></svg>
<div class="abs" style="left:12.500px;top:108.200px;width:939px;height:23.800px;background:#edf2fa;border-radius:12px"></div>
<div class="abs" style="left:17.500px;top:112.300px;width:60px;height:16.200px;background:#fff;border-radius:8.100px"></div>
<svg style="left:24.50px;top:116.20px" width="9" height="9" viewBox="0 0 9 9" ><circle cx="3.400" cy="3.400" r="2.700" fill="none" stroke="#444746" stroke-width="1.200"/><path d="M5.400 5.400L8.400 8.400" stroke="#444746" stroke-width="1.300"/></svg>
<svg class="x" style="left:39.50px;top:123.10px" width="1" height="1"><text x="0" y="0" font-size="8.70" letter-spacing="-0.028" fill="#444746" >Menus</text></svg>
<svg style="left:83.50px;top:117.00px" width="7" height="7" viewBox="0 0 7 7" ><path d="M3.500 0v7M0 3.500h7" stroke="#444746" stroke-width="1.300"/></svg>
<svg style="left:97.60px;top:119.30px" width="4.8" height="2.4" viewBox="0 0 4.8 2.4" ><path d="M0 0h4.8 L2.4 2.4z" fill="#444746"/></svg>
<div class="abs" style="left:106.45px;top:114.00px;width:0.70px;height:13.00px;background:#cfd2d6;"></div>
<svg style="left:114.00px;top:116.80px" width="8" height="8" viewBox="0 0 8 8" ><path d="M2.800 .6L.8 2.800l2 2.200" fill="none" stroke="#444746" stroke-width="1.100"/><path d="M1 2.800h3.600a2.400 2.400 0 0 1 0 4.800H2" fill="none" stroke="#444746" stroke-width="1.100"/></svg>
<svg style="left:132.80px;top:116.80px" width="8" height="8" viewBox="0 0 8 8" ><path d="M5.200 .6l2 2.200-2 2.200" fill="none" stroke="#444746" stroke-width="1.100"/><path d="M7 2.800H3.400a2.400 2.400 0 0 0 0 4.800H6" fill="none" stroke="#444746" stroke-width="1.100"/></svg>
<svg style="left:151.00px;top:116.00px" width="10" height="9.5" viewBox="0 0 10 9.5" ><rect x="2.500" y=".6" width="5" height="2.400" fill="none" stroke="#444746" stroke-width="1.100"/><rect x=".6" y="3" width="8.800" height="4" rx="1" fill="none" stroke="#444746" stroke-width="1.100"/><rect x="2.500" y="5.600" width="5" height="3.300" fill="#edf2fa" stroke="#444746" stroke-width="1.100"/></svg>
<svg style="left:171.00px;top:115.50px" width="8.5" height="10.5" viewBox="0 0 8.5 10.5" ><rect x=".6" y=".6" width="6" height="2.600" rx=".5" fill="none" stroke="#444746" stroke-width="1.100"/><path d="M6.600 1.900h1.300v2.800H4.100v1.500" fill="none" stroke="#444746" stroke-width="1"/><rect x="3.200" y="6.200" width="1.800" height="3.700" fill="none" stroke="#444746" stroke-width="1"/></svg>
<svg style="left:189.50px;top:116.20px" width="9" height="9" viewBox="0 0 9 9" ><circle cx="3.400" cy="3.400" r="2.700" fill="none" stroke="#444746" stroke-width="1.200"/><path d="M5.400 5.400L8.400 8.400" stroke="#444746" stroke-width="1.300"/><path d="M3.400 2.200v2.400M2.200 3.400h2.400" stroke="#444746" stroke-width=".8"/></svg>
<svg class="x" style="left:207.50px;top:123.10px" width="1" height="1"><text x="0" y="0" font-size="8.70" letter-spacing="0.068" fill="#444746" >Fit</text></svg>
<svg style="left:240.60px;top:119.30px" width="4.8" height="2.4" viewBox="0 0 4.8 2.4" ><path d="M0 0h4.8 L2.4 2.4z" fill="#444746"/></svg>
<div class="abs" style="left:252.65px;top:114.00px;width:0.70px;height:13.00px;background:#cfd2d6;"></div>
<div class="abs" style="left:256.800px;top:111.200px;width:17px;height:17.600px;background:#d3e3fd;border-radius:3px"></div>
<svg style="left:262.00px;top:116.00px" width="7" height="9.5" viewBox="0 0 7 9.5" ><path d="M.6 .6v7.600l2-1.800 1.300 2.800 1.200-.55-1.300-2.750h2.600z" fill="#0b2d6b" stroke="#0b2d6b" stroke-width=".5" stroke-linejoin="round"/></svg>
<svg style="left:279.50px;top:115.50px" width="10.5" height="10.5" viewBox="0 0 10.5 10.5" ><rect x="1.600" y="1.600" width="7.300" height="7.300" fill="none" stroke="#444746" stroke-width="1"/><g fill="#edf2fa" stroke="#444746" stroke-width=".8"><rect x=".4" y=".4" width="2.200" height="2.200"/><rect x="7.900" y=".4" width="2.200" height="2.200"/><rect x=".4" y="7.900" width="2.200" height="2.200"/><rect x="7.900" y="7.900" width="2.200" height="2.200"/></g><path d="M3.800 3.800h3M5.300 3.800v3.200" stroke="#444746" stroke-width=".9"/></svg>
<svg style="left:299.00px;top:116.20px" width="9.5" height="9" viewBox="0 0 9.5 9" ><rect x=".6" y=".6" width="8.300" height="7.800" rx="1" fill="none" stroke="#444746" stroke-width="1.100"/><path d="M2.200 6.800l1.600-2 1.200 1.400 1-1 1.400 1.600z" fill="#444746"/></svg>
<svg style="left:319.00px;top:115.60px" width="10.5" height="10.5" viewBox="0 0 10.5 10.5" ><circle cx="3.900" cy="3.900" r="3.300" fill="none" stroke="#444746" stroke-width="1.100"/><path d="M7.200 4.600h2.600v5.200H4.600V7.300" fill="none" stroke="#444746" stroke-width="1.100"/></svg>
<svg style="left:339.50px;top:116.50px" width="8" height="8" viewBox="0 0 8 8" ><path d="M1 1L7 7" stroke="#444746" stroke-width="1.400" stroke-linecap="round"/></svg>
<svg style="left:353.60px;top:119.30px" width="4.8" height="2.4" viewBox="0 0 4.8 2.4" ><path d="M0 0h4.8 L2.4 2.4z" fill="#444746"/></svg>
<div class="abs" style="left:362.45px;top:114.00px;width:0.70px;height:13.00px;background:#cfd2d6;"></div>
<svg style="left:369.00px;top:115.80px" width="10.5" height="9.5" viewBox="0 0 10.5 9.5" ><path d="M3.200 .6l4 4-3.200 3.200a.8.800 0 0 1-1.100 0L.8 5.700a.8.800 0 0 1 0-1.100L4 1.400" fill="none" stroke="#444746" stroke-width="1.100"/><path d="M1 5.100h5.600L3.900 7.800z" fill="#444746"/><path d="M8.800 6.200c.6.900 1 1.500 1 2a1 1 0 0 1-2 0c0-.5.400-1.100 1-2z" fill="#444746"/></svg>
<svg style="left:390.50px;top:116.00px" width="9" height="9" viewBox="0 0 9 9" ><path d="M.8 8.200l.5-2.200L6 1.300l1.700 1.700L3 7.700z" fill="#444746" stroke="#444746" stroke-width=".6"/><path d="M5.500 1.800l1.700 1.700 1-1a.6.600 0 0 0 0-.8l-.9-.9a.6.600 0 0 0-.8 0z" fill="#444746"/></svg>
<svg style="left:410.50px;top:116.30px" width="9" height="8.5" viewBox="0 0 9 8.5" ><path d="M0 .5h9" stroke="#444746" stroke-width="1"/><path d="M0 3h9" stroke="#444746" stroke-width="1.600"/><path d="M0 6.500h9" stroke="#444746" stroke-width="2.600"/></svg>
<svg style="left:431.00px;top:116.30px" width="9" height="8.5" viewBox="0 0 9 8.5" ><path d="M0 1h9" stroke="#444746" stroke-width="2"/><path d="M0 4.300h9" stroke="#444746" stroke-width="1.100" stroke-dasharray="2.400 .9"/><path d="M0 7.400h9" stroke="#444746" stroke-width="1.100" stroke-dasharray="1 1"/></svg>
<div class="abs" style="left:446.65px;top:114.00px;width:0.70px;height:13.00px;background:#cfd2d6;"></div>
<svg class="x" style="left:457.50px;top:123.10px" width="1" height="1"><text x="0" y="0" font-size="8.70" letter-spacing="-0.199" fill="#444746" >Comin...</text></svg>
<svg style="left:496.60px;top:119.30px" width="4.8" height="2.4" viewBox="0 0 4.8 2.4" ><path d="M0 0h4.8 L2.4 2.4z" fill="#444746"/></svg>
<div class="abs" style="left:510.65px;top:114.00px;width:0.70px;height:13.00px;background:#cfd2d6;"></div>
<svg style="left:518.50px;top:120.00px" width="7" height="1.2" viewBox="0 0 7 1.2" ><path d="M0 .6h7" stroke="#444746" stroke-width="1.100"/></svg>
<div class="abs" style="left:530.200px;top:113px;width:20.300px;height:14.700px;border:1px solid #747775;border-radius:2.500px"></div>
<svg class="x" style="left:533.70px;top:123.30px" width="1" height="1"><text x="0" y="0" font-size="8.70" letter-spacing="-0.258" fill="#444746" >325</text></svg>
<svg style="left:557.00px;top:117.00px" width="7" height="7" viewBox="0 0 7 7" ><path d="M3.500 0v7M0 3.500h7" stroke="#444746" stroke-width="1.100"/></svg>
<div class="abs" style="left:568.95px;top:114.00px;width:0.70px;height:13.00px;background:#cfd2d6;"></div>
<svg class="x" style="left:577.80px;top:123.50px" width="1" height="1"><text x="0" y="0" font-size="9.60" font-weight="bold" fill="#444746" >B</text></svg>
<svg class="x" style="left:597.2px;top:123.5px" width="1" height="1"><text x="0" y="0" font-size="10.4" font-style="italic" font-weight="bold" fill="#444746" font-family="Liberation Serif, serif">I</text></svg>
<svg class="x" style="left:615.90px;top:122.90px" width="1" height="1"><text x="0" y="0" font-size="9.20" fill="#444746" >U</text></svg>
<div class="abs" style="left:615.50px;top:124.60px;width:7.00px;height:0.90px;background:#444746;"></div>
<svg class="x" style="left:635.60px;top:122.30px" width="1" height="1"><text x="0" y="0" font-size="8.60" fill="#444746" >A</text></svg>
<div class="abs" style="left:632.00px;top:124.00px;width:13.50px;height:1.60px;background:#ffffff;"></div>
<svg style="left:654.30px;top:115.60px" width="9" height="9.5" viewBox="0 0 9 9.5" ><path d="M3.100 5.300L6.700 .900a.6.600 0 0 1 .9-.1l1.300 1.200a.6.600 0 0 1 0 .9L5.100 7.200z" fill="#444746"/><path d="M2.600 5.900l2 1.800-1.900 1.200H.7z" fill="#444746"/></svg>
<div class="abs" style="left:670.65px;top:114.00px;width:0.70px;height:13.00px;background:#cfd2d6;"></div>
<svg style="left:677.60px;top:118.00px" width="10" height="5.2" viewBox="0 0 10 5.2" ><path d="M4.200 .6H2.600a2 2 0 0 0 0 4h1.600M5.800 .6h1.600a2 2 0 0 1 0 4H5.800M3.200 2.600h3.600" fill="none" stroke="#444746" stroke-width="1.100"/></svg>
<svg style="left:696.00px;top:115.80px" width="10.5" height="10.5" viewBox="0 0 10.5 10.5" ><path d="M.6 .6h9.300v7.200H3L.6 10z" fill="none" stroke="#444746" stroke-width="1.100" stroke-linejoin="round"/><path d="M5.250 2.400v3.600M3.450 4.200h3.600" stroke="#444746" stroke-width="1"/></svg>
<div class="abs" style="left:712.45px;top:114.00px;width:0.70px;height:13.00px;background:#cfd2d6;"></div>
<div class="abs" style="left:716.500px;top:111.200px;width:22px;height:17.600px;background:#dfe3ea;border-radius:3px"></div>
<svg style="left:719.40px;top:115.90px" width="8.3" height="10.4" viewBox="0 0 8.3 10.4" ><path d="M0 0.475h8.3" stroke="#444746" stroke-width="0.95"/><path d="M0 2.555h5.5" stroke="#444746" stroke-width="0.95"/><path d="M0 4.635h8.3" stroke="#444746" stroke-width="0.95"/><path d="M0 6.715h5.5" stroke="#444746" stroke-width="0.95"/><path d="M0 8.795h8.3" stroke="#444746" stroke-width="0.95"/></svg>
<svg style="left:732.40px;top:119.30px" width="4.8" height="2.4" viewBox="0 0 4.8 2.4" ><path d="M0 0h4.8 L2.4 2.4z" fill="#444746"/></svg>
<svg style="left:745.00px;top:116.00px" width="10" height="9" viewBox="0 0 10 9" ><path d="M1.800 .8v7.400M.3 2.300L1.800.8l1.500 1.500M.3 6.700l1.500 1.500 1.500-1.500" fill="none" stroke="#444746" stroke-width=".9"/><path d="M5 1.400h5M5 4.500h5M5 7.600h5" stroke="#444746" stroke-width="1.100"/></svg>
<svg style="left:764.80px;top:116.40px" width="10" height="8.5" viewBox="0 0 10 8.5" ><circle cx=".9" cy="1" r=".9" fill="#444746"/><circle cx=".9" cy="4.200" r=".9" fill="#444746"/><circle cx=".9" cy="7.400" r=".9" fill="#444746"/><path d="M3 1h7M3 4.200h7M3 7.400h7" stroke="#444746" stroke-width="1.100"/></svg>
<svg style="left:779.60px;top:119.30px" width="4.8" height="2.4" viewBox="0 0 4.8 2.4" ><path d="M0 0h4.8 L2.4 2.4z" fill="#444746"/></svg>
<svg style="left:791.00px;top:116.00px" width="10" height="9" viewBox="0 0 10 9" ><path d="M.4 .4h.8v2.200M.2 3.800h1.400L.2 5.600h1.400M.2 7h1.400v2H.2M.6 8h.8" fill="none" stroke="#444746" stroke-width=".6"/><path d="M3.200 1.400h6.800M3.200 4.500h6.800M3.200 7.600h6.800" stroke="#444746" stroke-width="1.100"/></svg>
<svg style="left:806.10px;top:119.30px" width="4.8" height="2.4" viewBox="0 0 4.8 2.4" ><path d="M0 0h4.8 L2.4 2.4z" fill="#444746"/></svg>
<svg style="left:821.20px;top:116.50px" width="1.6" height="8" viewBox="0 0 1.6 8" ><circle cx=".8" cy=".8" r=".8" fill="#444746"/><circle cx=".8" cy="4" r=".8" fill="#444746"/><circle cx=".8" cy="7.200" r=".8" fill="#444746"/></svg>
<svg style="left:903.50px;top:116.00px" width="9" height="9.5" viewBox="0 0 9 9.5" ><path d="M.8 .8l7.400 2.800-3.200 1.400L3.600 8.600z" fill="none" stroke="#1f1f1f" stroke-width="1.200" stroke-linejoin="round"/></svg>
<svg style="left:918.40px;top:119.30px" width="4.8" height="2.4" viewBox="0 0 4.8 2.4" ><path d="M0 0h4.8 L2.4 2.4z" fill="#444746"/></svg>
<svg style="left:930.50px;top:118.30px" width="7.5" height="4.5" viewBox="0 0 7.5 4.5" ><path d="M.6 4L3.750 .8 6.900 4" fill="none" stroke="#444746" stroke-width="1.200"/></svg>
<svg class="x" style="left:17.80px;top:158.60px" width="1" height="1"><text x="0" y="0" font-size="7.40" fill="#444746" >1</text></svg>
<div class="abs" style="left:27px;top:148.400px;width:94.200px;height:119.400px;border:2px solid #1a5fd8;border-radius:7px;background:#fff"></div>
<svg style="left:972.20px;top:116.00px" width="11" height="11" viewBox="0 0 11 11" ><rect x="1.600" y="1.600" width="7.800" height="7.800" fill="#fff"/><path d="M0 1.600A1.600 1.600 0 0 1 1.600 0H8.600V2.400H2.400V8.600H0z" fill="#4285f4"/><path d="M8.600 0h.8A1.600 1.600 0 0 1 11 1.600V2.400H8.600z" fill="#1967d2"/><path d="M8.600 2.400H11V8.600H8.600z" fill="#fbbc04"/><path d="M0 8.600h2.400V11H1.600A1.600 1.600 0 0 1 0 9.400z" fill="#188038"/><path d="M2.400 8.600h6.200V11H2.400z" fill="#34a853"/><path d="M8.600 8.600H11L8.600 11z" fill="#ea4335"/><text x="5.500" y="7.600" font-size="5" font-weight="bold" fill="#4285f4" text-anchor="middle" font-family="Liberation Sans, sans-serif">31</text></svg>
<svg style="left:972.20px;top:149.50px" width="11" height="11" viewBox="0 0 11 11" ><rect width="11" height="11" rx="1.400" fill="#fbbc04"/><path d="M5.500 2.300a2.200 2.200 0 0 1 1.200 4v1H4.300v-1a2.200 2.200 0 0 1 1.200-4z" fill="#fff"/><rect x="4.500" y="7.900" width="2" height=".9" fill="#fff"/></svg>
<svg style="left:972.20px;top:183.50px" width="11" height="11" viewBox="0 0 11 11" ><circle cx="5.300" cy="5.900" r="3.900" fill="none" stroke="#1a73e8" stroke-width="1.700"/><path d="M3.600 5.800l1.400 1.400L9.600 1.800" fill="none" stroke="#1a73e8" stroke-width="1.600"/><circle cx="5.300" cy="5.900" r="1" fill="#1a73e8" opacity="0"/></svg>
<svg style="left:973.20px;top:217.50px" width="9" height="10.5" viewBox="0 0 9 10.5" ><circle cx="4.500" cy="2.500" r="2.300" fill="#1a73e8"/><path d="M0 10.200V8.600C0 6.800 2.600 5.900 4.500 5.900S9 6.800 9 8.600v1.600z" fill="#1a73e8"/></svg>
<svg style="left:974.40px;top:251.30px" width="6.6" height="9.6" viewBox="0 0 7.6 11" ><path d="M3.800 11C1.500 7.600 0 5.800 0 3.800a3.800 3.800 0 0 1 7.600 0C7.600 5.800 6.100 7.600 3.800 11z" fill="#34a853"/><path d="M3.800 0A3.800 3.800 0 0 1 7.200 2L3.800 3.800z" fill="#1a73e8"/><path d="M.4 2A3.800 3.800 0 0 1 3.800 0v3.800z" fill="#ea4335"/><path d="M0 3.800c0 .8.300 1.600.7 2.400L3.800 3.800.4 2A3.800 3.800 0 0 0 0 3.800z" fill="#fbbc04"/><circle cx="3.800" cy="3.800" r="1.300" fill="#fff"/></svg>
<div class="abs" style="left:970.00px;top:282.30px;width:15.50px;height:0.70px;background:#dadce0;"></div>
<svg style="left:973.40px;top:304.70px" width="8.6" height="8.6" viewBox="0 0 8.6 8.6" ><path d="M4.300 0v8.600M0 4.300h8.600" stroke="#1f1f1f" stroke-width="1.100"/></svg>
<svg style="left:975.00px;top:520.50px" width="5" height="8" viewBox="0 0 5 8" ><path d="M.8 .8L4.200 4 .8 7.200" fill="none" stroke="#5f6368" stroke-width="1.100"/></svg>
<div class="abs" style="left:144.500px;top:503px;width:807px;height:28.500px;background:#edf2fa;border-radius:4px"></div>
<svg class="x" style="left:154.00px;top:518.70px" width="1" height="1"><text x="0" y="0" font-size="8.40" letter-spacing="0.201" fill="#2a2d30" >Click to add speaker notes</text></svg>
<div class="abs" style="left:534.00px;top:489.30px;width:28.00px;height:1.30px;background:#5f6368;border-radius:1px"></div>
<div class="abs" style="left:14.700px;top:495.600px;width:34px;height:34px;border-radius:17px;background:#5c5cf0;box-shadow:0 1px 4px rgba(60,60,120,.35)"></div>
<svg style="left:24.20px;top:505.10px" width="15" height="15" viewBox="0 0 15 15" ><g transform="translate(7.500 7.500)" stroke="#fff" stroke-width="1.500" stroke-linecap="round"><path d="M0 -2.800V-6.600" transform="rotate(0)"/><path d="M0 -2.800V-6.600" transform="rotate(30)"/><path d="M0 -2.800V-6.600" transform="rotate(60)"/><path d="M0 -2.800V-6.600" transform="rotate(90)"/><path d="M0 -2.800V-6.600" transform="rotate(120)"/><path d="M0 -2.800V-6.600" transform="rotate(150)"/><path d="M0 -2.800V-6.600" transform="rotate(180)"/><path d="M0 -2.800V-6.600" transform="rotate(210)"/><path d="M0 -2.800V-6.600" transform="rotate(240)"/><path d="M0 -2.800V-6.600" transform="rotate(270)"/><path d="M0 -2.800V-6.600" transform="rotate(300)"/><path d="M0 -2.800V-6.600" transform="rotate(330)"/></g><circle cx="7.500" cy="7.500" r="2.700" fill="#fff"/><circle cx="7.500" cy="7.500" r="1.500" fill="#4a4ae0"/></svg>
<svg style="left:5.40px;top:508.00px" width="7" height="9.5" viewBox="0 0 7 9.5" ><circle cx="1" cy="1" r=".95" fill="#4d4dea"/><circle cx="1" cy="4.6" r=".95" fill="#4d4dea"/><circle cx="1" cy="8.2" r=".95" fill="#4d4dea"/><circle cx="5.6" cy="1" r=".95" fill="#4d4dea"/><circle cx="5.6" cy="4.6" r=".95" fill="#4d4dea"/><circle cx="5.6" cy="8.2" r=".95" fill="#4d4dea"/></svg>
<svg style="left:51.50px;top:516.50px" width="4" height="6" viewBox="0 0 4 6" ><path d="M3.400 .6L.8 3l2.600 2.400" fill="none" stroke="#3c4043" stroke-width="1"/></svg>
<div class="abs" style="left:143.00px;top:148.00px;width:808.50px;height:0.80px;background:#d2d4d7;"></div>
<svg style="left:0.00px;top:0.00px" width="1024" height="576" viewBox="0 0 1024 576" ><path d="M431.90 146.00V148" stroke="#a8abae" stroke-width=".7"/><path d="M435.50 146.00V148" stroke="#a8abae" stroke-width=".7"/><path d="M439.10 146.00V148" stroke="#a8abae" stroke-width=".7"/><path d="M442.70 143.80V148" stroke="#9a9da1" stroke-width=".7"/><path d="M446.30 146.00V148" stroke="#a8abae" stroke-width=".7"/><path d="M449.90 146.00V148" stroke="#a8abae" stroke-width=".7"/><path d="M453.50 146.00V148" stroke="#a8abae" stroke-width=".7"/><path d="M457.10 143.80V148" stroke="#9a9da1" stroke-width=".7"/><path d="M460.70 146.00V148" stroke="#a8abae" stroke-width=".7"/><path d="M464.30 146.00V148" stroke="#a8abae" stroke-width=".7"/><path d="M467.90 146.00V148" stroke="#a8abae" stroke-width=".7"/><path d="M471.50 143.80V148" stroke="#9a9da1" stroke-width=".7"/><path d="M475.10 146.00V148" stroke="#a8abae" stroke-width=".7"/><path d="M478.70 146.00V148" stroke="#a8abae" stroke-width=".7"/><path d="M482.30 146.00V148" stroke="#a8abae" stroke-width=".7"/><path d="M485.90 143.80V148" stroke="#9a9da1" stroke-width=".7"/><path d="M489.50 146.00V148" stroke="#a8abae" stroke-width=".7"/><path d="M493.10 146.00V148" stroke="#a8abae" stroke-width=".7"/><path d="M496.70 146.00V148" stroke="#a8abae" stroke-width=".7"/><path d="M500.30 143.80V148" stroke="#9a9da1" stroke-width=".7"/><path d="M503.90 146.00V148" stroke="#a8abae" stroke-width=".7"/><path d="M507.50 146.00V148" stroke="#a8abae" stroke-width=".7"/><path d="M511.10 146.00V148" stroke="#a8abae" stroke-width=".7"/><path d="M514.70 143.80V148" stroke="#9a9da1" stroke-width=".7"/><path d="M518.30 146.00V148" stroke="#a8abae" stroke-width=".7"/><path d="M521.90 146.00V148" stroke="#a8abae" stroke-width=".7"/><path d="M525.50 146.00V148" stroke="#a8abae" stroke-width=".7"/><path d="M529.10 143.80V148" stroke="#9a9da1" stroke-width=".7"/><path d="M532.70 146.00V148" stroke="#a8abae" stroke-width=".7"/><path d="M536.30 146.00V148" stroke="#a8abae" stroke-width=".7"/><path d="M539.90 146.00V148" stroke="#a8abae" stroke-width=".7"/><path d="M543.50 143.80V148" stroke="#9a9da1" stroke-width=".7"/><path d="M547.10 146.00V148" stroke="#a8abae" stroke-width=".7"/><path d="M550.70 146.00V148" stroke="#a8abae" stroke-width=".7"/><path d="M554.30 146.00V148" stroke="#a8abae" stroke-width=".7"/><path d="M557.90 143.80V148" stroke="#9a9da1" stroke-width=".7"/><path d="M561.50 146.00V148" stroke="#a8abae" stroke-width=".7"/><path d="M565.10 146.00V148" stroke="#a8abae" stroke-width=".7"/><path d="M568.70 146.00V148" stroke="#a8abae" stroke-width=".7"/><path d="M572.30 143.80V148" stroke="#9a9da1" stroke-width=".7"/><path d="M575.90 146.00V148" stroke="#a8abae" stroke-width=".7"/><path d="M579.50 146.00V148" stroke="#a8abae" stroke-width=".7"/><path d="M583.10 146.00V148" stroke="#a8abae" stroke-width=".7"/><path d="M586.70 143.80V148" stroke="#9a9da1" stroke-width=".7"/><path d="M590.30 146.00V148" stroke="#a8abae" stroke-width=".7"/><path d="M593.90 146.00V148" stroke="#a8abae" stroke-width=".7"/><path d="M597.50 146.00V148" stroke="#a8abae" stroke-width=".7"/><path d="M601.10 143.80V148" stroke="#9a9da1" stroke-width=".7"/><path d="M604.70 146.00V148" stroke="#a8abae" stroke-width=".7"/><path d="M608.30 146.00V148" stroke="#a8abae" stroke-width=".7"/><path d="M611.90 146.00V148" stroke="#a8abae" stroke-width=".7"/><path d="M615.50 143.80V148" stroke="#9a9da1" stroke-width=".7"/><path d="M619.10 146.00V148" stroke="#a8abae" stroke-width=".7"/><path d="M622.70 146.00V148" stroke="#a8abae" stroke-width=".7"/><path d="M626.30 146.00V148" stroke="#a8abae" stroke-width=".7"/><path d="M629.90 143.80V148" stroke="#9a9da1" stroke-width=".7"/><path d="M633.50 146.00V148" stroke="#a8abae" stroke-width=".7"/><path d="M637.10 146.00V148" stroke="#a8abae" stroke-width=".7"/><path d="M640.70 146.00V148" stroke="#a8abae" stroke-width=".7"/><path d="M644.30 143.80V148" stroke="#9a9da1" stroke-width=".7"/><path d="M647.90 146.00V148" stroke="#a8abae" stroke-width=".7"/><path d="M651.50 146.00V148" stroke="#a8abae" stroke-width=".7"/><path d="M655.10 146.00V148" stroke="#a8abae" stroke-width=".7"/><path d="M658.70 143.80V148" stroke="#9a9da1" stroke-width=".7"/><path d="M662.30 146.00V148" stroke="#a8abae" stroke-width=".7"/><path d="M665.90 146.00V148" stroke="#a8abae" stroke-width=".7"/><path d="M669.50 146.00V148" stroke="#a8abae" stroke-width=".7"/><path d="M673.10 143.80V148" stroke="#9a9da1" stroke-width=".7"/></svg>
<svg style="left:0.00px;top:0.00px" width="1024" height="576" viewBox="0 0 1024 576" ><path d="M141.00 162.40H144" stroke="#a8abae" stroke-width=".7"/><path d="M141.00 166.00H144" stroke="#a8abae" stroke-width=".7"/><path d="M139.00 169.60H144" stroke="#9a9da1" stroke-width=".7"/><path d="M141.00 173.20H144" stroke="#a8abae" stroke-width=".7"/><path d="M141.00 176.80H144" stroke="#a8abae" stroke-width=".7"/><path d="M141.00 180.40H144" stroke="#a8abae" stroke-width=".7"/><path d="M139.00 184.00H144" stroke="#9a9da1" stroke-width=".7"/><path d="M141.00 187.60H144" stroke="#a8abae" stroke-width=".7"/><path d="M141.00 191.20H144" stroke="#a8abae" stroke-width=".7"/><path d="M141.00 194.80H144" stroke="#a8abae" stroke-width=".7"/><path d="M139.00 198.40H144" stroke="#9a9da1" stroke-width=".7"/><path d="M141.00 202.00H144" stroke="#a8abae" stroke-width=".7"/><path d="M141.00 205.60H144" stroke="#a8abae" stroke-width=".7"/><path d="M141.00 209.20H144" stroke="#a8abae" stroke-width=".7"/><path d="M139.00 212.80H144" stroke="#9a9da1" stroke-width=".7"/><path d="M141.00 216.40H144" stroke="#a8abae" stroke-width=".7"/><path d="M141.00 220.00H144" stroke="#a8abae" stroke-width=".7"/><path d="M141.00 223.60H144" stroke="#a8abae" stroke-width=".7"/><path d="M139.00 227.20H144" stroke="#9a9da1" stroke-width=".7"/><path d="M141.00 230.80H144" stroke="#a8abae" stroke-width=".7"/><path d="M141.00 234.40H144" stroke="#a8abae" stroke-width=".7"/><path d="M141.00 238.00H144" stroke="#a8abae" stroke-width=".7"/><path d="M139.00 241.60H144" stroke="#9a9da1" stroke-width=".7"/><path d="M141.00 245.20H144" stroke="#a8abae" stroke-width=".7"/><path d="M141.00 248.80H144" stroke="#a8abae" stroke-width=".7"/><path d="M141.00 252.40H144" stroke="#a8abae" stroke-width=".7"/><path d="M139.00 256.00H144" stroke="#9a9da1" stroke-width=".7"/><path d="M141.00 259.60H144" stroke="#a8abae" stroke-width=".7"/><path d="M141.00 263.20H144" stroke="#a8abae" stroke-width=".7"/><path d="M141.00 266.80H144" stroke="#a8abae" stroke-width=".7"/><path d="M139.00 270.40H144" stroke="#9a9da1" stroke-width=".7"/><path d="M141.00 274.00H144" stroke="#a8abae" stroke-width=".7"/><path d="M141.00 277.60H144" stroke="#a8abae" stroke-width=".7"/><path d="M141.00 281.20H144" stroke="#a8abae" stroke-width=".7"/><path d="M139.00 284.80H144" stroke="#9a9da1" stroke-width=".7"/><path d="M141.00 288.40H144" stroke="#a8abae" stroke-width=".7"/><path d="M141.00 292.00H144" stroke="#a8abae" stroke-width=".7"/><path d="M141.00 295.60H144" stroke="#a8abae" stroke-width=".7"/><path d="M139.00 299.20H144" stroke="#9a9da1" stroke-width=".7"/><path d="M141.00 302.80H144" stroke="#a8abae" stroke-width=".7"/><path d="M141.00 306.40H144" stroke="#a8abae" stroke-width=".7"/><path d="M141.00 310.00H144" stroke="#a8abae" stroke-width=".7"/><path d="M139.00 313.60H144" stroke="#9a9da1" stroke-width=".7"/><path d="M141.00 317.20H144" stroke="#a8abae" stroke-width=".7"/><path d="M141.00 320.80H144" stroke="#a8abae" stroke-width=".7"/><path d="M141.00 324.40H144" stroke="#a8abae" stroke-width=".7"/><path d="M139.00 328.00H144" stroke="#9a9da1" stroke-width=".7"/><path d="M141.00 331.60H144" stroke="#a8abae" stroke-width=".7"/><path d="M141.00 335.20H144" stroke="#a8abae" stroke-width=".7"/><path d="M141.00 338.80H144" stroke="#a8abae" stroke-width=".7"/><path d="M139.00 342.40H144" stroke="#9a9da1" stroke-width=".7"/><path d="M141.00 346.00H144" stroke="#a8abae" stroke-width=".7"/><path d="M141.00 349.60H144" stroke="#a8abae" stroke-width=".7"/><path d="M141.00 353.20H144" stroke="#a8abae" stroke-width=".7"/><path d="M139.00 356.80H144" stroke="#9a9da1" stroke-width=".7"/><path d="M141.00 360.40H144" stroke="#a8abae" stroke-width=".7"/><path d="M141.00 364.00H144" stroke="#a8abae" stroke-width=".7"/><path d="M141.00 367.60H144" stroke="#a8abae" stroke-width=".7"/><path d="M139.00 371.20H144" stroke="#9a9da1" stroke-width=".7"/><path d="M141.00 374.80H144" stroke="#a8abae" stroke-width=".7"/><path d="M141.00 378.40H144" stroke="#a8abae" stroke-width=".7"/><path d="M141.00 382.00H144" stroke="#a8abae" stroke-width=".7"/><path d="M139.00 385.60H144" stroke="#9a9da1" stroke-width=".7"/><path d="M141.00 389.20H144" stroke="#a8abae" stroke-width=".7"/><path d="M141.00 392.80H144" stroke="#a8abae" stroke-width=".7"/><path d="M141.00 396.40H144" stroke="#a8abae" stroke-width=".7"/><path d="M139.00 400.00H144" stroke="#9a9da1" stroke-width=".7"/><path d="M141.00 403.60H144" stroke="#a8abae" stroke-width=".7"/><path d="M141.00 407.20H144" stroke="#a8abae" stroke-width=".7"/><path d="M141.00 410.80H144" stroke="#a8abae" stroke-width=".7"/><path d="M139.00 414.40H144" stroke="#9a9da1" stroke-width=".7"/><path d="M141.00 418.00H144" stroke="#a8abae" stroke-width=".7"/><path d="M141.00 421.60H144" stroke="#a8abae" stroke-width=".7"/><path d="M141.00 425.20H144" stroke="#a8abae" stroke-width=".7"/><path d="M139.00 428.80H144" stroke="#9a9da1" stroke-width=".7"/><path d="M141.00 432.40H144" stroke="#a8abae" stroke-width=".7"/><path d="M141.00 436.00H144" stroke="#a8abae" stroke-width=".7"/><path d="M141.00 439.60H144" stroke="#a8abae" stroke-width=".7"/><path d="M139.00 443.20H144" stroke="#9a9da1" stroke-width=".7"/><path d="M141.00 446.80H144" stroke="#a8abae" stroke-width=".7"/><path d="M141.00 450.40H144" stroke="#a8abae" stroke-width=".7"/><path d="M141.00 454.00H144" stroke="#a8abae" stroke-width=".7"/><path d="M139.00 457.60H144" stroke="#9a9da1" stroke-width=".7"/><path d="M141.00 461.20H144" stroke="#a8abae" stroke-width=".7"/><path d="M141.00 464.80H144" stroke="#a8abae" stroke-width=".7"/><path d="M141.00 468.40H144" stroke="#a8abae" stroke-width=".7"/><path d="M139.00 472.00H144" stroke="#9a9da1" stroke-width=".7"/><path d="M141.00 475.60H144" stroke="#a8abae" stroke-width=".7"/></svg>
<svg style="left:467.90px;top:141.10px" width="6.8" height="6.2" viewBox="0 0 6.8 6.2" ><rect x="0" y="0" width="6.800" height="1.800" fill="#2f7df6"/><path d="M0 2.600h6.800L3.400 6.200z" fill="#2f7df6"/></svg>
<svg style="left:630.40px;top:141.10px" width="6.8" height="6.2" viewBox="0 0 6.8 6.2" ><rect x="0" y="0" width="6.800" height="1.800" fill="#2f7df6"/><path d="M0 2.600h6.800L3.400 6.200z" fill="#2f7df6"/></svg>
<div class="abs" style="left:429.700px;top:159.500px;width:245.800px;height:318.600px;background:#fff;box-shadow:0 0 0 .5px #eef0f2"></div>
<svg style="left:0.00px;top:0.00px" width="1024" height="576" viewBox="0 0 1024 576" ><path d="M444.2 213.7A36.1 36.1 0 0 1 480.3 177.6H624.9A36.1 36.1 0 0 1 661 213.7V423.3A36.1 36.1 0 0 1 624.9 459.4H480.3A36.1 36.1 0 0 1 444.2 423.3z" fill="#36ddcb" stroke="#595959" stroke-width="3.700" stroke-dasharray="14.500 10.800 3.700 10.800"/><path d="M458.6 223.3A31.3 31.3 0 0 1 489.9 192H615.1A31.3 31.3 0 0 1 646.4 223.3V413.7A31.3 31.3 0 0 1 615.1 445H489.9A31.3 31.3 0 0 1 458.6 413.7z" fill="none" stroke="#fff" stroke-width="3.700" stroke-dasharray="14.500 10.800 3.700 10.800"/><text font-family="'DejaVu Sans Light','DejaVu Sans','Liberation Sans',sans-serif" font-weight="200" fill="#fff" stroke="#fff" stroke-width="4.6" stroke-linejoin="round" stroke-linecap="round"><tspan x="475" y="366.3" font-size="128" textLength="82" lengthAdjust="spacingAndGlyphs">A</tspan><tspan x="557.5" y="366" font-size="130" textLength="80" lengthAdjust="spacingAndGlyphs">a</tspan></text></svg>
<div class="abs" style="left:558.30px;top:242.00px;width:1.50px;height:156.00px;background:#ffffff;"></div>
<svg style="left:0.00px;top:0.00px" width="1024" height="576" viewBox="0 0 1024 576" ><rect x="468" y="238.400" width="169" height="239.600" fill="none" stroke="#4d92ec" stroke-width="1.250"/><path d="M552.400 238V224" stroke="#1a73e8" stroke-width="1.100"/><circle cx="552.400" cy="223.900" r="2.300" fill="#1a73e8" stroke="#9fd4ee" stroke-width=".8"/><rect x="465.7" y="236.1" width="4.600" height="4.600" fill="#1a73e8" stroke="#a8c7fa" stroke-width=".5"/><rect x="550.2" y="236.1" width="4.600" height="4.600" fill="#1a73e8" stroke="#a8c7fa" stroke-width=".5"/><rect x="634.7" y="236.1" width="4.600" height="4.600" fill="#1a73e8" stroke="#a8c7fa" stroke-width=".5"/><rect x="465.7" y="355.7" width="4.600" height="4.600" fill="#1a73e8" stroke="#a8c7fa" stroke-width=".5"/><rect x="634.7" y="355.7" width="4.600" height="4.600" fill="#1a73e8" stroke="#a8c7fa" stroke-width=".5"/><rect x="465.7" y="475.7" width="4.600" height="4.600" fill="#1a73e8" stroke="#a8c7fa" stroke-width=".5"/><rect x="550.2" y="475.7" width="4.600" height="4.600" fill="#1a73e8" stroke="#a8c7fa" stroke-width=".5"/><rect x="634.7" y="475.7" width="4.600" height="4.600" fill="#1a73e8" stroke="#a8c7fa" stroke-width=".5"/></svg>
<div class="abs" style="left:444.700px;top:458px;width:19.300px;height:19.500px;background:#fff;border-radius:3.500px;box-shadow:0 .5px 2px rgba(60,64,67,.35)"></div>
<svg style="left:449.50px;top:463.50px" width="10" height="8" viewBox="0 0 10 8" ><path d="M0 2.600h10M0 5.400h10" stroke="#444746" stroke-width="1"/><path d="M1.600 .4L8.400 7.600" stroke="#444746" stroke-width="1"/></svg>
<svg style="left:0.00px;top:0.00px" width="1024" height="576" viewBox="0 0 1024 576" ><g transform="translate(30.4 151.5) scale(0.3565) translate(-429.700 -159.300)"><path d="M444.2 213.7A36.1 36.1 0 0 1 480.3 177.6H624.9A36.1 36.1 0 0 1 661 213.7V423.3A36.1 36.1 0 0 1 624.9 459.4H480.3A36.1 36.1 0 0 1 444.2 423.3z" fill="#36ddcb" stroke="#595959" stroke-width="3.700" stroke-dasharray="14.500 10.800 3.700 10.800"/><path d="M458.6 223.3A31.3 31.3 0 0 1 489.9 192H615.1A31.3 31.3 0 0 1 646.4 223.3V413.7A31.3 31.3 0 0 1 615.1 445H489.9A31.3 31.3 0 0 1 458.6 413.7z" fill="none" stroke="#fff" stroke-width="3.700" stroke-dasharray="14.500 10.800 3.700 10.800"/><text font-family="'DejaVu Sans Light','DejaVu Sans','Liberation Sans',sans-serif" font-weight="200" fill="#fff" stroke="#fff" stroke-width="3.6" stroke-linejoin="round" stroke-linecap="round"><tspan x="475" y="366.3" font-size="128" textLength="82" lengthAdjust="spacingAndGlyphs">A</tspan><tspan x="557.5" y="366" font-size="130" textLength="80" lengthAdjust="spacingAndGlyphs">a</tspan></text></g></svg>
<div class="abs" style="left:716.600px;top:129.800px;width:68.700px;height:38px;background:#edf2fa;border-radius:3.500px;box-shadow:0 1px 3px rgba(60,64,67,.25),0 0 .5px rgba(60,64,67,.2)"></div>
<svg style="left:724.00px;top:137.10px" width="8.3" height="10.4" viewBox="0 0 8.3 10.4" ><path d="M0 0.475h8.3" stroke="#444746" stroke-width="0.95"/><path d="M0 2.555h5.5" stroke="#444746" stroke-width="0.95"/><path d="M0 4.635h8.3" stroke="#444746" stroke-width="0.95"/><path d="M0 6.715h5.5" stroke="#444746" stroke-width="0.95"/><path d="M0 8.795h8.3" stroke="#444746" stroke-width="0.95"/></svg>
<svg style="left:755.00px;top:137.10px" width="8.3" height="10.4" viewBox="0 0 8.3 10.4" ><path d="M0 0.475h8.3" stroke="#444746" stroke-width="0.95"/><path d="M2.8 2.555h5.5" stroke="#444746" stroke-width="0.95"/><path d="M0 4.635h8.3" stroke="#444746" stroke-width="0.95"/><path d="M2.8 6.715h5.5" stroke="#444746" stroke-width="0.95"/><path d="M0 8.795h8.3" stroke="#444746" stroke-width="0.95"/></svg>
<svg style="left:770.80px;top:137.10px" width="8.3" height="10.4" viewBox="0 0 8.3 10.4" ><path d="M0 0.475h8.3" stroke="#444746" stroke-width="0.95"/><path d="M0 2.555h8.3" stroke="#444746" stroke-width="0.95"/><path d="M0 4.635h8.3" stroke="#444746" stroke-width="0.95"/><path d="M0 6.715h8.3" stroke="#444746" stroke-width="0.95"/><path d="M0 8.795h8.3" stroke="#444746" stroke-width="0.95"/></svg>
<div class="abs" style="left:719.300px;top:148.300px;width:16px;height:15.700px;background:#d3e3fd;border-radius:2px"></div>
<svg style="left:724.00px;top:152.20px" width="8" height="9" viewBox="0 0 8 9" ><path d="M0 .6h8" stroke="#0b2d6b" stroke-width="1.100"/><path d="M4 8.600V2.600M1.700 4.800L4 2.500 6.300 4.800" fill="none" stroke="#0b2d6b" stroke-width="1.100"/></svg>
<svg style="left:739.70px;top:152.20px" width="8" height="9.6" viewBox="0 0 8 9.6" ><path d="M0 4.800h8" stroke="#444746" stroke-width="1"/><path d="M4 0v3.200M2.500 1.900L4 3.400l1.500-1.500M4 9.600V6.400M2.500 7.700L4 6.200l1.500 1.500" fill="none" stroke="#444746" stroke-width="1"/></svg>
<svg style="left:755.00px;top:152.30px" width="8" height="9" viewBox="0 0 8 9" ><path d="M0 8.200h8" stroke="#444746" stroke-width="1.100"/><path d="M4 0v6.200M1.700 4L4 6.300 6.300 4" fill="none" stroke="#444746" stroke-width="1.100"/></svg>
<div class="abs" style="left:737px;top:132.700px;width:12px;height:13.600px;background:#d3e3fd"></div>
<svg style="left:0.00px;top:0.00px" width="1024" height="576" viewBox="0 0 1024 576" ><path d="M736.600 130.200Q743 129.600 752.200 130.400Q753 131 752.600 137Q752.400 144 752.200 148.200Q746 148.900 735.800 148.200Q734.300 147.800 734.500 140Q734.400 133 735.200 131Q735.600 130.300 736.600 130.200z" fill="none" stroke="#24dc08" stroke-width="4.800" stroke-linejoin="round"/><path d="M751 128.300l3.800.3" stroke="#24dc08" stroke-width="1.600" stroke-linecap="round"/></svg>
<svg style="left:738.90px;top:137.10px" width="8.3" height="10.4" viewBox="0 0 8.3 10.4" ><path d="M0 0.475h8.3" stroke="#0b3a8a" stroke-width="0.95"/><path d="M1.4 2.555h5.5" stroke="#0b3a8a" stroke-width="0.95"/><path d="M0 4.635h8.3" stroke="#0b3a8a" stroke-width="0.95"/><path d="M1.4 6.715h5.5" stroke="#0b3a8a" stroke-width="0.95"/><path d="M0 8.795h8.3" stroke="#0b3a8a" stroke-width="0.95"/></svg>
<!-- taskbar -->
<div class="abs" style="left:0;top:544px;width:1024px;height:32px;background:linear-gradient(90deg,#dddcdc 0,#dddcdc 84%,#dee7d6 100%)"></div>
<svg style="left:14.80px;top:552.60px" width="13.4" height="13.7" viewBox="0 0 13.4 13.7" ><defs><linearGradient id="sg" x1="0" y1="0" x2="1" y2="1"><stop offset=".15" stop-color="#f8c22c"/><stop offset=".6" stop-color="#f59a1c"/><stop offset="1" stop-color="#ee7414"/></linearGradient></defs><circle cx="6.700" cy="6.850" r="6.700" fill="url(#sg)"/></svg>
<svg style="left:21.20px;top:548.40px" width="10" height="10" viewBox="0 0 10 10" ><circle cx="5" cy="5" r="5" fill="#c8321e"/><text x="5" y="7.600" font-size="7" fill="#fff" text-anchor="middle" font-family="Liberation Sans, sans-serif">1</text></svg>
<svg class="x" style="left:34.20px;top:557.30px" width="1" height="1"><text x="0" y="0" font-size="8.20" letter-spacing="-0.870" fill="#2a2a2a" >61°F</text></svg>
<svg class="x" style="left:34.60px;top:567.50px" width="1" height="1"><text x="0" y="0" font-size="8.60" letter-spacing="-0.771" fill="#5a5a5a" >Sunny</text></svg>
<svg style="left:267.00px;top:552.00px" width="16.5" height="16" viewBox="0 0 16.5 16" ><defs><linearGradient id="wg" x1="0" y1="0" x2="1" y2="1"><stop offset="0" stop-color="#4cc2f1"/><stop offset="1" stop-color="#0a6fd6"/></linearGradient></defs><rect x="0" y="0" width="7.800" height="7.600" fill="url(#wg)"/><rect x="8.700" y="0" width="7.800" height="7.600" fill="url(#wg)"/><rect x="0" y="8.400" width="7.800" height="7.600" fill="url(#wg)"/><rect x="8.700" y="8.400" width="7.800" height="7.600" fill="url(#wg)"/></svg>
<div class="abs" style="left:293px;top:550px;width:145px;height:20.300px;border-radius:10.150px;background:#f3f3f3;box-shadow:0 0 0 .5px #d0d0d0"></div>
<svg style="left:299.80px;top:555.00px" width="10" height="10.5" viewBox="0 0 10 10.5" ><circle cx="4.300" cy="4.300" r="3.500" fill="none" stroke="#222" stroke-width="1.200"/><path d="M6.800 7L9.400 9.800" stroke="#222" stroke-width="1.300" stroke-linecap="round"/></svg>
<svg class="x" style="left:316.80px;top:563.60px" width="1" height="1"><text x="0" y="0" font-size="9.30" letter-spacing="-0.393" fill="#555" >Search</text></svg>
<svg style="left:0.00px;top:0.00px" width="1024" height="576" viewBox="0 0 1024 576" ><g transform="translate(1.300 0)"><ellipse cx="409.60" cy="561.600" rx="4.300" ry="3.100" transform="rotate(-28 409.60 561.600)" fill="#668b9a"/><path d="M406.50 561.500L403.90 564L407.50 563.200z" fill="#5c7f8e"/><circle cx="410.70" cy="556.600" r="3.200" fill="#7097a8"/><ellipse cx="412.40" cy="557.400" rx="1.900" ry="2.100" fill="#f1dcb8"/><ellipse cx="413.00" cy="561.900" rx="1.900" ry="3" fill="#f3e2c2"/><circle cx="412.90" cy="558.300" r=".8" fill="#f3a6a0"/><circle cx="412.20" cy="556.700" r=".45" fill="#3a3a3a"/><path d="M414.10 557.300l1.20 .5l-1.20 .5z" fill="#e9a24a"/></g><g transform="translate(-1.300 0)"><ellipse cx="426.00" cy="561.600" rx="4.300" ry="3.100" transform="rotate(28 426.00 561.600)" fill="#668b9a"/><path d="M429.10 561.500L431.70 564L428.10 563.200z" fill="#5c7f8e"/><circle cx="424.90" cy="556.600" r="3.200" fill="#7097a8"/><ellipse cx="423.20" cy="557.400" rx="1.900" ry="2.100" fill="#f1dcb8"/><ellipse cx="422.60" cy="561.900" rx="1.900" ry="3" fill="#f3e2c2"/><circle cx="422.70" cy="558.300" r=".8" fill="#f3a6a0"/><circle cx="423.40" cy="556.700" r=".45" fill="#3a3a3a"/><path d="M421.50 557.300l-1.20 .5l1.20 .5z" fill="#e9a24a"/></g><path d="M404.800 566.200c8 -.8 18 .8 29.600 -.4" stroke="#9a7656" stroke-width="1.500" fill="none" stroke-linecap="round"/><path d="M410 565.200v1M412.500 565.300v1M423 565.300v1M425.500 565.200v1" stroke="#c9a06a" stroke-width=".8"/><path d="M407.40 557.70C404.68 555.83 405.87 553.79 407.40 555.24C408.93 553.79 410.12 555.83 407.40 557.70C407.40 557.70 407.40 557.70 407.40 557.70C407.40 557.70 407.40 557.70 407.40 557.70z" fill="#e8423a"/><path d="M404.60 559.40C402.68 558.08 403.52 556.64 404.60 557.66C405.68 556.64 406.52 558.08 404.60 559.40C404.60 559.40 404.60 559.40 404.60 559.40C404.60 559.40 404.60 559.40 404.60 559.40z" fill="#ec4a40"/><path d="M431.00 558.90C427.64 556.59 429.11 554.07 431.00 555.85C432.89 554.07 434.36 556.59 431.00 558.90C431.00 558.90 431.00 558.90 431.00 558.90C431.00 558.90 431.00 558.90 431.00 558.90z" fill="#e83a30"/><path d="M433.30 562.40C431.38 561.08 432.22 559.64 433.30 560.66C434.38 559.64 435.22 561.08 433.30 562.40C433.30 562.40 433.30 562.40 433.30 562.40C433.30 562.40 433.30 562.40 433.30 562.40z" fill="#f08a8a"/></svg>
<svg style="left:447.00px;top:552.50px" width="17" height="15" viewBox="0 0 17 15" ><rect x="4" y="0" width="12.500" height="10.500" rx="1.200" fill="#f4f4f4"/><rect x="0" y="4" width="12.500" height="10.500" rx="1.200" fill="#1d1d1d"/><rect x="4" y="4" width="8.500" height="6.500" fill="#bdbdbd"/></svg>
<svg style="left:476.50px;top:552.50px" width="15" height="15.5" viewBox="0 0 15 15.5" ><path d="M7.500 0A7.300 7.300 0 0 1 14.800 7.300 7.300 7.300 0 0 1 7.500 14.600c-1.200 0-2.300-.3-3.300-.8L.6 15l1-3.400A7.300 7.300 0 0 1 7.500 0z" fill="#6264d8"/><rect x="3.600" y="4.600" width="5.800" height="5.200" rx="1.200" fill="#fff"/><path d="M9.600 6.600l2.200-1.400v4.200L9.600 8z" fill="#fff"/></svg>
<svg style="left:505.50px;top:552.00px" width="15.5" height="16" viewBox="0 0 15.5 16" ><path d="M.8 3.600h13.900a.8.800 0 0 1 .8.800v10a1.600 1.600 0 0 1-1.600 1.600H1.600A1.600 1.600 0 0 1 0 14.400v-10a.8.800 0 0 1 .8-.8z" fill="#1c4fa3"/><path d="M4.600 3.600V1.800A1.200 1.200 0 0 1 5.800 .6h3.900a1.200 1.200 0 0 1 1.200 1.200v1.800" fill="none" stroke="#2a66c4" stroke-width="1.200"/><rect x="4.300" y="6.400" width="3.100" height="3.100" fill="#f25022"/><rect x="8.100" y="6.400" width="3.100" height="3.100" fill="#7fba00"/><rect x="4.300" y="10.200" width="3.100" height="3.100" fill="#00a4ef"/><rect x="8.100" y="10.200" width="3.100" height="3.100" fill="#ffb900"/></svg>
<div class="abs" style="left:529.800px;top:547px;width:25.700px;height:25.500px;border-radius:3px;background:#ebebeb;box-shadow:0 0 0 .5px #e2e2e2"></div>
<svg style="left:534.50px;top:551.80px" width="16.5" height="16.5" viewBox="0 0 16.5 16.5" ><defs><linearGradient id="eg" x1="0" y1="0" x2="1" y2="1"><stop offset="0" stop-color="#35c1a0"/><stop offset=".5" stop-color="#2a9be0"/><stop offset="1" stop-color="#1553b6"/></linearGradient></defs><circle cx="8.250" cy="8.250" r="8.250" fill="url(#eg)"/><path d="M1 9.500C1.500 5 5 3 8.500 3.200c3.500.2 6 2.400 6 5 0 1.800-1.400 2.800-3 2.800-1 0-1.600-.4-1.600-.9 0-.6.600-.8.600-1.700 0-1.300-1.300-2.300-3-2.300C4.500 6.100 2 8 1 9.500z" fill="#aee8d0" opacity=".75"/><circle cx="6.800" cy="10.800" r="3.700" fill="#d9dde0"/><circle cx="6.800" cy="9.800" r="1.500" fill="#8f979e"/><path d="M4.200 13.200a2.800 2.200 0 0 1 5.200 0 3.700 3.700 0 0 1-5.200 0z" fill="#8f979e"/></svg>
<div class="abs" style="left:537.00px;top:570.30px;width:11.50px;height:1.80px;background:#2a78d6;border-radius:1px"></div>
<svg style="left:564.00px;top:552.50px" width="16.5" height="14.5" viewBox="0 0 16.5 14.5" ><path d="M0 1.500A1.500 1.500 0 0 1 1.500 0h4.300l1.700 1.800h7.500A1.500 1.500 0 0 1 16.500 3.300V13a1.500 1.500 0 0 1-1.500 1.500H1.500A1.500 1.500 0 0 1 0 13z" fill="#f0b429"/><path d="M0 4h16.500v9a1.500 1.500 0 0 1-1.500 1.500H1.500A1.500 1.500 0 0 1 0 13z" fill="#fbd35a"/><rect x="3" y="9.200" width="10.500" height="5.300" fill="#2f8ae6"/><rect x="5.400" y="10.600" width="5.700" height="1.300" fill="#1b5fb5"/></svg>
<svg style="left:594.00px;top:551.50px" width="16.5" height="17" viewBox="0 0 16.5 17" ><rect x="1" y="1" width="8" height="8" fill="#fbfbfb" stroke="#d33a2c" stroke-width="1.300" stroke-dasharray="1.800 1.200"/><path d="M7 5l4.500 7M13.500 5.500L8 12" stroke="#8a8f94" stroke-width="1.200"/><circle cx="7.200" cy="13.800" r="1.900" fill="none" stroke="#2a8fe0" stroke-width="1.200"/><circle cx="13.200" cy="12.600" r="1.900" fill="none" stroke="#2a8fe0" stroke-width="1.200"/></svg>
<div class="abs" style="left:600.00px;top:571.00px;width:3.00px;height:1.40px;background:#8c8c8c;border-radius:.7px"></div>
<svg style="left:622.80px;top:552.00px" width="16.5" height="16" viewBox="0 0 16.5 16" ><rect width="16.500" height="16" fill="#fafafa"/><text x="8.250" y="5.800" font-size="4.600" font-weight="bold" fill="#222" text-anchor="middle" font-family="Liberation Sans, sans-serif">amazon</text><path d="M4 6.800c3 1.200 6 1.200 8.500 0" stroke="#f39a1e" stroke-width=".8" fill="none"/><path d="M1 8.400h2l.8 1.400h11.500l-1.300 5H5z" fill="#2f8fd0"/><path d="M5 10.800h9.500M4.600 12.400h9.500M6.500 9.800v5M9 9.800v5M11.500 9.800v5" stroke="#cfe7f7" stroke-width=".6"/></svg>
<svg style="left:651.80px;top:552.00px" width="16.5" height="16.5" viewBox="0 0 16.5 16.5" ><circle cx="8.250" cy="8.250" r="8" fill="#3a96cf"/><circle cx="8.250" cy="8.250" r="6.600" fill="none" stroke="#fff" stroke-width=".9"/><text x="8.250" y="12" font-size="10.500" font-weight="bold" fill="#fff" text-anchor="middle" font-family="Liberation Serif, serif">W</text></svg>
<div class="abs" style="left:658.50px;top:571.00px;width:3.00px;height:1.40px;background:#8c8c8c;border-radius:.7px"></div>
<svg style="left:682.50px;top:553.00px" width="14.5" height="14.5" viewBox="0 0 14.5 14.5" ><circle cx="7.250" cy="7.250" r="7.250" fill="#3a9fd8"/><path d="M2 7.250C3.500 4.600 5.400 3.600 7.250 3.600S11 4.600 12.500 7.250C11 9.900 9.100 10.900 7.250 10.900S3.500 9.900 2 7.250z" fill="#fff"/><circle cx="7.250" cy="7.250" r="2.300" fill="#1f6fa8"/><circle cx="7.250" cy="7.250" r=".9" fill="#fff"/></svg>
<svg style="left:711.50px;top:552.50px" width="14.5" height="14.5" viewBox="0 0 14.5 14.5" ><rect width="14.500" height="14.500" rx="1" fill="#2a2a2a"/><path d="M14.500 6.500v8h-8z" fill="#f7c51e"/></svg>
<div class="abs" style="left:717.30px;top:571.00px;width:3.00px;height:1.40px;background:#8c8c8c;border-radius:.7px"></div>
<svg style="left:739.50px;top:551.80px" width="17" height="16.5" viewBox="0 0 17 16.5" ><defs><linearGradient id="cg" x1="0" y1="0" x2="1" y2="1"><stop offset="0" stop-color="#b455e0"/><stop offset="1" stop-color="#5a5ae8"/></linearGradient></defs><path d="M.5 4.500L15.500 .5l.8 3L1.300 7.500z" fill="#a13fd0"/><rect x=".8" y="6.400" width="15.700" height="10" rx="1.200" fill="url(#cg)"/><rect x=".8" y="9.500" width="15.700" height="2.500" fill="#c9a3f2" opacity=".7"/></svg>
<div class="abs" style="left:746.30px;top:571.00px;width:3.00px;height:1.40px;background:#8c8c8c;border-radius:.7px"></div>
<svg style="left:836.80px;top:557.80px" width="7.5" height="4.5" viewBox="0 0 7.5 4.5" ><path d="M.6 4L3.750 .8 6.900 4" fill="none" stroke="#222" stroke-width="1"/></svg>
<svg style="left:856.00px;top:555.50px" width="12" height="8.5" viewBox="0 0 12 8.5" ><path d="M3 8A2.600 2.600 0 0 1 2.800 2.900 3.500 3.500 0 0 1 9.400 3.500 2.300 2.300 0 0 1 9.400 8z" fill="none" stroke="#222" stroke-width="1"/><path d="M3.500 5.400c1.500-.8 3.500-.8 6 .4" fill="none" stroke="#222" stroke-width=".7"/></svg>
<svg style="left:877.00px;top:555.00px" width="11.5" height="9" viewBox="0 0 11.5 9" ><path d="M.6 3.200a7.300 7.300 0 0 1 10.300 0" fill="none" stroke="#222" stroke-width="1"/><path d="M2.300 5a4.900 4.900 0 0 1 6.900 0" fill="none" stroke="#222" stroke-width="1"/><path d="M4 6.800a2.500 2.500 0 0 1 3.500 0" fill="none" stroke="#222" stroke-width="1"/><circle cx="5.750" cy="8.200" r=".8" fill="#222"/></svg>
<svg style="left:893.50px;top:555.80px" width="11" height="8" viewBox="0 0 11 8" ><path d="M.6 2.800h1.800L5 .6v6.800L2.400 5.200H.6z" fill="none" stroke="#222" stroke-width=".9" stroke-linejoin="round"/><path d="M7 2.400l3 3M10 2.400l-3 3" stroke="#222" stroke-width=".9"/></svg>
<svg style="left:909.00px;top:555.50px" width="12.5" height="8.5" viewBox="0 0 12.5 8.5" ><rect x=".5" y="2.200" width="10" height="5.600" rx="1.300" fill="#222"/><rect x="10.800" y="3.800" width="1.200" height="2.400" fill="#222"/><path d="M3 2.400V.6h1.600v1.800M2.200 0h3.200" stroke="#222" stroke-width=".8" fill="none"/></svg>
<svg class="x" style="left:939.00px;top:556.30px" width="1" height="1"><text x="0" y="0" font-size="8.00" letter-spacing="-0.082" fill="#1f1f1f" >8:58 PM</text></svg>
<svg class="x" style="left:932.00px;top:567.50px" width="1" height="1"><text x="0" y="0" font-size="8.00" letter-spacing="0.089" fill="#1f1f1f" >2/14/2024</text></svg>
<svg style="left:974.50px;top:554.50px" width="8.5" height="10.5" viewBox="0 0 8.5 10.5" ><path d="M4.250 .4a3 3 0 0 1 3 3v2.800l1 1.600H.25l1-1.600V3.400a3 3 0 0 1 3-3z" fill="#1a66c8"/><path d="M3 8.600a1.300 1.300 0 0 0 2.500 0z" fill="#1a66c8"/></svg>
<svg style="left:995.00px;top:551.50px" width="16" height="17" viewBox="0 0 16 17" ><path d="M1 9C.4 5.500 2 2 5.400 1.600h3L6 11.600H3.400A2.400 2.400 0 0 1 1 9z" fill="#2a8fe8"/><path d="M5.400 1.600C7 1.200 8.600 1.400 9 3L7.800 7l-2-.4z" fill="#35c1a0"/><path d="M14.800 5c.8 3.500-1 8-4.400 8.300H7.200L9.800 2.900h2.600A2.400 2.400 0 0 1 14.800 5z" fill="#c24fd8"/><path d="M9 3c.6-1.400 2.400-1.600 3.600-.8l-2 5.200z" fill="#f0b030"/><path d="M6.400 5h3.400L8.200 10.400H4.800z" fill="#f7d26a"/><rect x="5" y="11" width="10.500" height="5.500" rx="1.200" fill="#f4c430"/><text x="10.250" y="15.300" font-size="4.600" font-weight="bold" fill="#222" text-anchor="middle" font-family="Liberation Sans, sans-serif">PRE</text></svg>
</body></html>
